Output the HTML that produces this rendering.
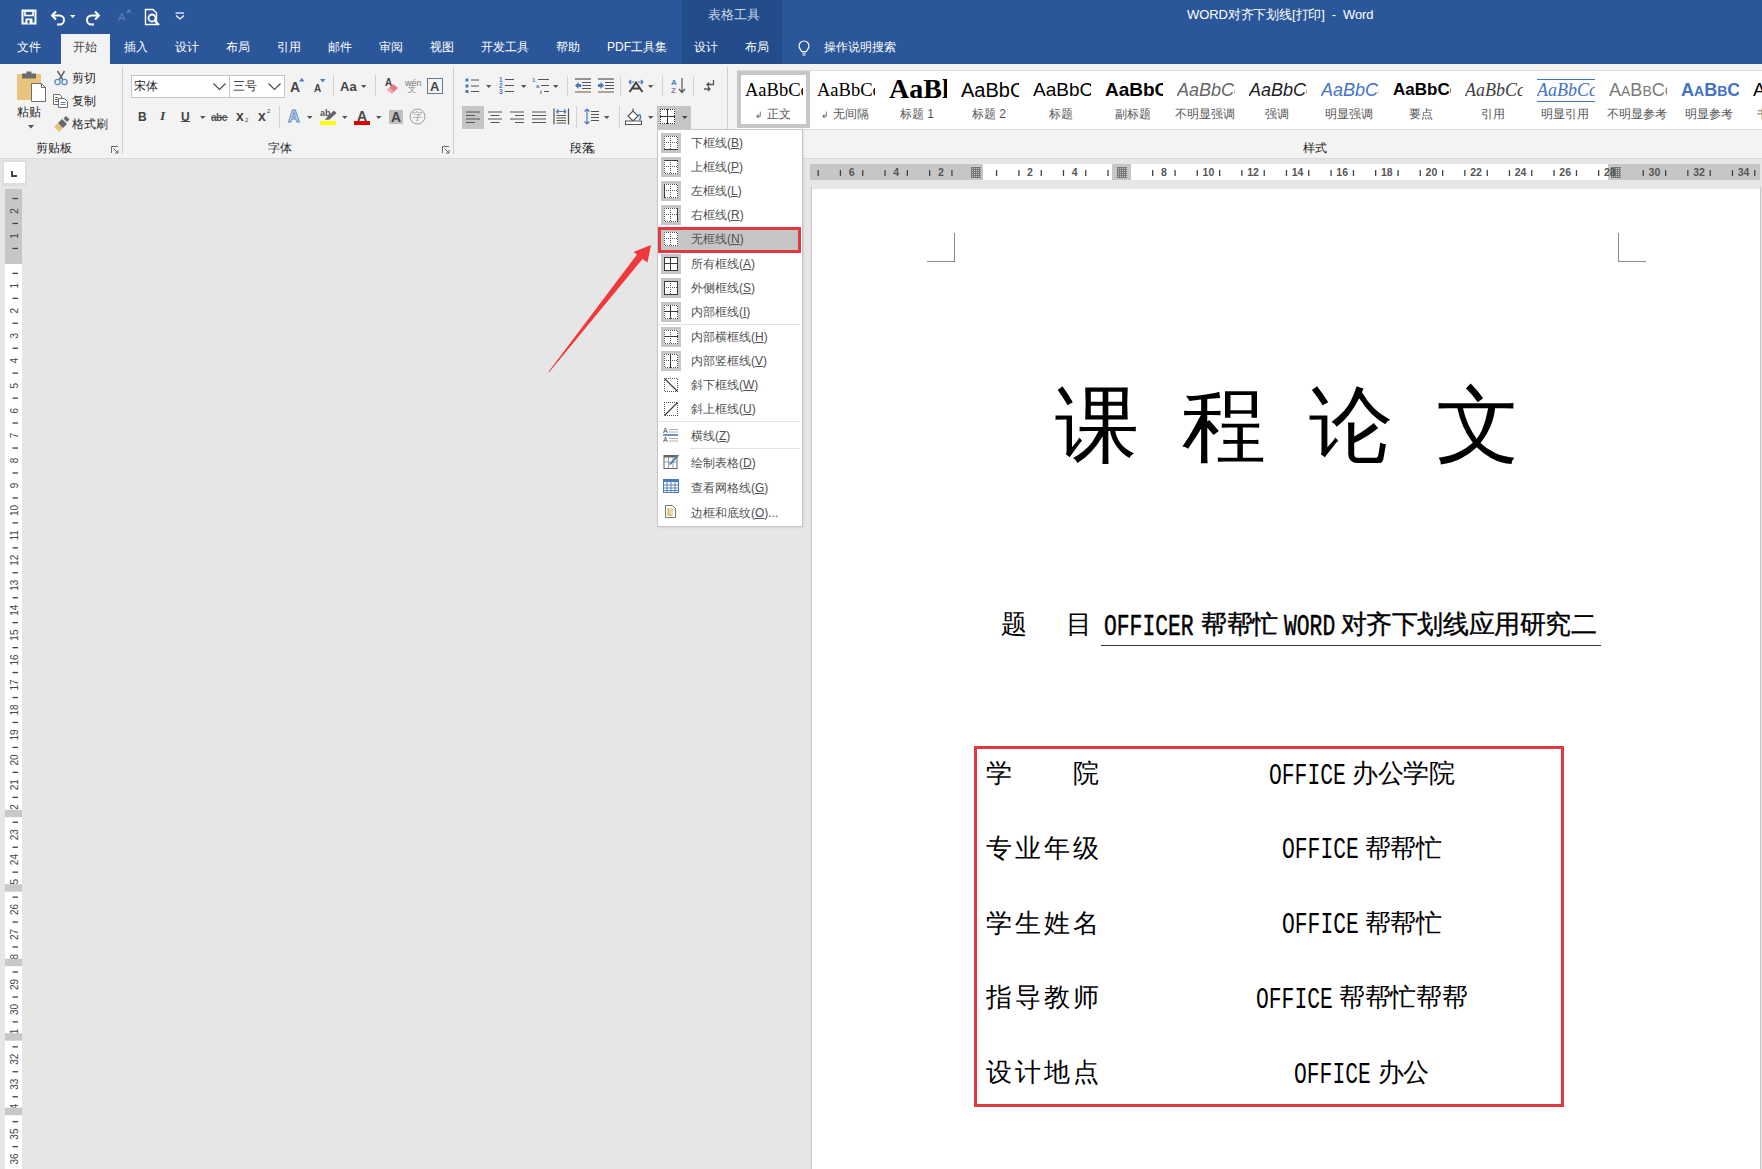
<!DOCTYPE html>
<html><head><meta charset="utf-8">
<style>
*{margin:0;padding:0;box-sizing:border-box}
html,body{width:1762px;height:1169px;overflow:hidden;background:#e6e6e6;font-family:"Liberation Sans",sans-serif;}
.a{position:absolute;white-space:nowrap;line-height:1}
svg.a{overflow:visible}
.tab{color:#fff;font-size:12px;line-height:15px}
.sr{font-family:"Liberation Serif",serif}
</style></head><body>

<div class="a" style="left:0px;top:0px;width:1762px;height:64px;background:#2b579a"></div>
<div class="a" style="left:682px;top:0px;width:100px;height:64px;background:#234c8a"></div>
<div class="a" style="left:61px;top:34px;width:49px;height:30px;background:#f3f3f3"></div>
<div class="a tab" style="left:17px;top:40px;color:#fff">文件</div>
<div class="a tab" style="left:73px;top:40px;color:#444">开始</div>
<div class="a tab" style="left:124px;top:40px;color:#fff">插入</div>
<div class="a tab" style="left:175px;top:40px;color:#fff">设计</div>
<div class="a tab" style="left:226px;top:40px;color:#fff">布局</div>
<div class="a tab" style="left:277px;top:40px;color:#fff">引用</div>
<div class="a tab" style="left:328px;top:40px;color:#fff">邮件</div>
<div class="a tab" style="left:379px;top:40px;color:#fff">审阅</div>
<div class="a tab" style="left:430px;top:40px;color:#fff">视图</div>
<div class="a tab" style="left:481px;top:40px;color:#fff">开发工具</div>
<div class="a tab" style="left:556px;top:40px;color:#fff">帮助</div>
<div class="a tab" style="left:607px;top:40px;color:#fff">PDF工具集</div>
<div class="a tab" style="left:694px;top:40px;color:#fff">设计</div>
<div class="a tab" style="left:745px;top:40px;color:#fff">布局</div>
<div class="a tab" style="left:824px;top:40px;color:#fff">操作说明搜索</div>
<div class="a tab" style="left:708px;top:7.5px;font-size:12.5px;color:#c9d5e8">表格工具</div>
<div class="a" style="left:1187px;top:7px;color:#fff;font-size:13px;line-height:15px;letter-spacing:-0.12px">WORD对齐下划线[打印]&nbsp;&nbsp;-&nbsp;&nbsp;Word</div>
<svg class="a" style="left:21px;top:9px;" width="16" height="16" viewBox="0 0 16 16"><path d="M1.5 1.5 H14.5 V14.5 H1.5 Z" fill="none" stroke="#fff" stroke-width="2"/><rect x="4" y="2" width="8" height="4.5" fill="none" stroke="#fff" stroke-width="1.6"/><rect x="4.5" y="9.5" width="7" height="5" fill="#fff"/><rect x="6.5" y="11" width="2" height="3.5" fill="#2b579a"/></svg>
<svg class="a" style="left:50px;top:9px;" width="16" height="16" viewBox="0 0 16 16"><path d="M2.5 6.5 H9.5 A4.5 4.5 0 0 1 9.5 15.5 H7" fill="none" stroke="#fff" stroke-width="2"/><path d="M6 2.5 L2 6.5 L6 10.5" fill="none" stroke="#fff" stroke-width="2"/></svg>
<svg class="a" style="left:70px;top:15px;" width="6" height="4" viewBox="0 0 6 4"><path d="M0 0 H5.5 L2.75 3 Z" fill="#fff"/></svg>
<svg class="a" style="left:85px;top:9px;" width="16" height="16" viewBox="0 0 16 16"><path d="M13.5 6.5 H6.5 A4.5 4.5 0 0 0 6.5 15.5 H9" fill="none" stroke="#fff" stroke-width="2"/><path d="M10 2.5 L14 6.5 L10 10.5" fill="none" stroke="#fff" stroke-width="2"/></svg>
<div class="a" style="left:118px;top:12px;font-size:11px;color:#5d7fb5;">A</div>
<svg class="a" style="left:126px;top:9px;" width="6" height="4" viewBox="0 0 6 4"><path d="M0 3.5 L2.75 0 L5.5 3.5 Z" fill="#5d7fb5"/></svg>
<svg class="a" style="left:144px;top:8px;" width="17" height="18" viewBox="0 0 17 18"><path d="M1.5 1.5 H9 L12.5 5 V16.5 H1.5 Z" fill="none" stroke="#fff" stroke-width="1.4"/><circle cx="8" cy="10" r="3.5" fill="none" stroke="#fff" stroke-width="1.8"/><path d="M10.5 12.5 L15 17" stroke="#fff" stroke-width="2"/></svg>
<svg class="a" style="left:175px;top:12px;" width="10" height="8" viewBox="0 0 10 8"><path d="M0.5 1 H9" stroke="#fff" stroke-width="1.2"/><path d="M1 3.5 L5 7 L9 3.5" fill="none" stroke="#fff" stroke-width="1.2"/></svg>
<svg class="a" style="left:798px;top:40px;" width="12" height="16" viewBox="0 0 12 16"><path d="M6 1 A5 5 0 0 1 11 6 C11 8.5 9 9.5 8.5 11.5 H3.5 C3 9.5 1 8.5 1 6 A5 5 0 0 1 6 1 Z" fill="none" stroke="#fff" stroke-width="1.2"/><path d="M4 13 H8 M4.5 15 H7.5" stroke="#fff" stroke-width="1.2"/></svg>
<div class="a" style="left:0px;top:64px;width:1762px;height:95px;background:#f3f3f3;border-bottom:1px solid #dadada"></div>
<div class="a" style="left:122px;top:67px;width:1px;height:87px;background:#d0d0d0"></div>
<div class="a" style="left:453px;top:67px;width:1px;height:87px;background:#d0d0d0"></div>
<div class="a" style="left:727px;top:67px;width:1px;height:87px;background:#d0d0d0"></div>
<svg class="a" style="left:16px;top:71px;" width="31" height="32" viewBox="0 0 31 32">
<rect x="1" y="3" width="24" height="26" fill="#e9c47c"/>
<rect x="6" y="2.5" width="14" height="5" fill="#6d6d6d"/>
<rect x="10.5" y="0.5" width="5" height="3" fill="#6d6d6d"/>
<path d="M15.5 12.5 H25.5 L29.5 16.5 V30.5 H15.5 Z" fill="#fff" stroke="#6d6d6d" stroke-width="1"/>
<path d="M25.5 12.5 V16.5 H29.5" fill="none" stroke="#6d6d6d" stroke-width="1"/>
</svg>
<div class="a" style="left:17px;top:106px;font-size:12px;color:#262626;">粘贴</div>
<svg class="a" style="left:28px;top:125px;" width="6" height="4" viewBox="0 0 6 4"><path d="M0 0 H6 L3 3.5 Z" fill="#505050"/></svg>
<svg class="a" style="left:53px;top:70px;" width="16" height="16" viewBox="0 0 16 16">
<path d="M4.5 1 L10 10 M11.5 1 L6 10" stroke="#6a6a6a" stroke-width="1.6" fill="none"/>
<circle cx="4.5" cy="12" r="2.6" fill="none" stroke="#5b8bc7" stroke-width="1.3"/>
<circle cx="11.5" cy="12" r="2.6" fill="none" stroke="#5b8bc7" stroke-width="1.3"/>
</svg>
<div class="a" style="left:72px;top:72px;font-size:12px;color:#262626;">剪切</div>
<svg class="a" style="left:53px;top:93px;" width="16" height="16" viewBox="0 0 16 16">
<path d="M0.5 1.5 H6.5 L8.5 3.5 V11.5 H0.5 Z" fill="#fff" stroke="#6a6a6a" stroke-width="1"/>
<path d="M2 4.5 H5 M2 6.5 H5 M2 8.5 H5" stroke="#6a6a6a" stroke-width="1"/>
<path d="M5.5 5.5 H11.5 L14.5 8.5 V14.5 H5.5 Z" fill="#fff" stroke="#6a6a6a" stroke-width="1"/>
<path d="M7.5 9.5 H12.5 M7.5 11.5 H12.5" stroke="#5b8bc7" stroke-width="1"/>
</svg>
<div class="a" style="left:72px;top:95px;font-size:12px;color:#262626;">复制</div>
<svg class="a" style="left:53px;top:116px;" width="17" height="17" viewBox="0 0 17 17">
<path d="M1 11 L5 7 L10 12 L6 16 Z" fill="#e6c27c"/>
<path d="M5 7 L9 3 L14 8 L10 12 Z" fill="#6a6a6a"/>
<path d="M10.5 2.5 L13 0 L16.5 3.5 L14 6 Z" fill="#6a6a6a"/>
</svg>
<div class="a" style="left:72px;top:118px;font-size:12px;color:#262626;">格式刷</div>
<svg class="a" style="left:111px;top:146px;" width="8" height="8" viewBox="0 0 8 8"><path d="M0.5 7 V0.5 H7" stroke="#6a6a6a" fill="none"/><path d="M2.5 2.5 L7 7 M4 7 H7 V4" stroke="#6a6a6a" fill="none"/></svg>
<svg class="a" style="left:442px;top:146px;" width="8" height="8" viewBox="0 0 8 8"><path d="M0.5 7 V0.5 H7" stroke="#6a6a6a" fill="none"/><path d="M2.5 2.5 L7 7 M4 7 H7 V4" stroke="#6a6a6a" fill="none"/></svg>
<svg class="a" style="left:587px;top:146px;" width="8" height="8" viewBox="0 0 8 8"><path d="M0.5 7 V0.5 H7" stroke="#6a6a6a" fill="none"/><path d="M2.5 2.5 L7 7 M4 7 H7 V4" stroke="#6a6a6a" fill="none"/></svg>
<div class="a" style="left:131px;top:75px;width:99px;height:23px;background:#fff;border:1px solid #c6c6c6"></div>
<div class="a" style="left:229px;top:75px;width:56px;height:23px;background:#fff;border:1px solid #c6c6c6"></div>
<div class="a" style="left:134px;top:80px;font-size:12px;color:#262626;">宋体</div>
<div class="a" style="left:233px;top:80px;font-size:12px;color:#262626;">三号</div>
<svg class="a" style="left:213px;top:83px;" width="13" height="8" viewBox="0 0 13 8"><path d="M0.5 0.5 L6.5 6.5 L12.5 0.5" fill="none" stroke="#444" stroke-width="1.1"/></svg>
<svg class="a" style="left:268px;top:83px;" width="13" height="8" viewBox="0 0 13 8"><path d="M0.5 0.5 L6.5 6.5 L12.5 0.5" fill="none" stroke="#444" stroke-width="1.1"/></svg>
<div class="a" style="left:290px;top:80px;font-size:14px;color:#444;font-weight:bold">A</div>
<svg class="a" style="left:299px;top:78px;" width="6" height="4" viewBox="0 0 6 4"><path d="M0 3.5 L2.75 0 L5.5 3.5 Z" fill="#4a7bbd"/></svg>
<div class="a" style="left:314px;top:84px;font-size:10px;color:#444;font-weight:bold">A</div>
<svg class="a" style="left:320px;top:79px;" width="6" height="4" viewBox="0 0 6 4"><path d="M0 0 H5.5 L2.75 3.5 Z" fill="#4a7bbd"/></svg>
<div class="a" style="left:333px;top:75px;width:1px;height:21px;background:#d2d2d2"></div>
<div class="a" style="left:340px;top:80px;font-size:13px;color:#444;font-weight:bold">Aa</div>
<svg class="a" style="left:361px;top:85px;" width="6" height="4" viewBox="0 0 6 4"><path d="M0 0 H5.5 L2.75 3 Z" fill="#555"/></svg>
<div class="a" style="left:375px;top:75px;width:1px;height:21px;background:#d2d2d2"></div>
<div class="a" style="left:385px;top:78px;font-size:10px;color:#444;font-weight:bold">A</div>
<svg class="a" style="left:386px;top:83px;" width="14" height="11" viewBox="0 0 14 11"><path d="M1 7 L7 1 L12 5 L6 10.5 Z" fill="#e7778a"/><path d="M1 7 L3.5 4.5 L8.5 9 L6 10.5 Z" fill="#f0a8b3"/></svg>
<div class="a" style="left:405px;top:79px;font-size:9px;color:#777;">wén</div>
<div class="a" style="left:408px;top:86px;font-size:8px;color:#888;">文</div>
<div class="a" style="left:427px;top:78px;width:16px;height:16px;border:1.5px solid #5d7a98"></div>
<div class="a" style="left:430px;top:80px;font-size:13px;color:#444;font-weight:bold">A</div>
<div class="a" style="left:138px;top:111px;font-size:12px;color:#444;font-weight:bold">B</div>
<div class="a" style="left:160px;top:109px;font-size:13.5px;color:#444;font-style:italic;font-family:'Liberation Serif',serif;font-weight:bold">I</div>
<div class="a" style="left:181px;top:111px;font-size:12px;color:#444;font-weight:bold">U</div>
<div class="a" style="left:181px;top:121px;width:9px;height:1px;background:#444"></div>
<svg class="a" style="left:200px;top:116px;" width="6" height="4" viewBox="0 0 6 4"><path d="M0 0 H5.5 L2.75 3 Z" fill="#555"/></svg>
<div class="a" style="left:211px;top:113px;font-size:10px;color:#555;font-weight:bold;letter-spacing:-0.5px">abc</div>
<div class="a" style="left:211px;top:117px;width:17px;height:1px;background:#555"></div>
<div class="a" style="left:236px;top:109px;font-size:14px;color:#444;font-weight:bold">x</div>
<div class="a" style="left:245px;top:117px;font-size:6px;color:#444;">2</div>
<div class="a" style="left:258px;top:109px;font-size:14px;color:#444;font-weight:bold">x</div>
<div class="a" style="left:267px;top:108px;font-size:6px;color:#444;">2</div>
<div class="a" style="left:279px;top:106px;width:1px;height:22px;background:#d2d2d2"></div>
<div class="a" style="left:288px;top:109px;font-size:16px;color:#dfe9f5;font-weight:bold;-webkit-text-stroke:1px #5b8bc7">A</div>
<svg class="a" style="left:307px;top:116px;" width="6" height="4" viewBox="0 0 6 4"><path d="M0 0 H5.5 L2.75 3 Z" fill="#555"/></svg>
<div class="a" style="left:320px;top:109px;font-size:9px;color:#555;font-weight:bold">ab</div>
<svg class="a" style="left:324px;top:110px;" width="13" height="11" viewBox="0 0 13 11"><path d="M1 10 L3 7 L10 0.5 L12.5 3 L5.5 9.5 Z" fill="#666"/></svg>
<div class="a" style="left:320px;top:121px;width:16px;height:4px;background:#ffff00"></div>
<svg class="a" style="left:342px;top:116px;" width="6" height="4" viewBox="0 0 6 4"><path d="M0 0 H5.5 L2.75 3 Z" fill="#555"/></svg>
<div class="a" style="left:357px;top:109px;font-size:14px;color:#444;font-weight:bold">A</div>
<div class="a" style="left:354px;top:121px;width:16px;height:4px;background:#e00000"></div>
<svg class="a" style="left:376px;top:116px;" width="6" height="4" viewBox="0 0 6 4"><path d="M0 0 H5.5 L2.75 3 Z" fill="#555"/></svg>
<div class="a" style="left:389px;top:110px;width:14px;height:14px;background:#c0c0c0"></div>
<div class="a" style="left:391px;top:110px;font-size:14px;color:#444;font-weight:bold">A</div>
<svg class="a" style="left:409px;top:108px;" width="17" height="17" viewBox="0 0 17 17"><circle cx="8.5" cy="8.5" r="7.5" fill="none" stroke="#999" stroke-width="1"/></svg>
<div class="a" style="left:412px;top:111px;font-size:11px;color:#999;">字</div>
<svg class="a" style="left:465px;top:77px;" width="15" height="16" viewBox="0 0 15 16">
<rect x="0.5" y="1.5" width="3" height="3" fill="#4a7bbd"/><rect x="0.5" y="7.5" width="3" height="3" fill="#4a7bbd"/><rect x="0.5" y="13" width="3" height="3" fill="#4a7bbd"/>
<path d="M6 3 H14 M6 9 H14 M6 14.5 H14" stroke="#555" stroke-width="1.2"/>
</svg>
<svg class="a" style="left:486px;top:85px;" width="6" height="4" viewBox="0 0 6 4"><path d="M0 0 H5.5 L2.75 3 Z" fill="#555"/></svg>
<svg class="a" style="left:499px;top:76px;" width="16" height="18" viewBox="0 0 16 18">
<text x="0" y="6" font-size="6.5" font-family="Liberation Sans" font-weight="bold" fill="#4a7bbd">1</text>
<text x="0" y="12" font-size="6.5" font-family="Liberation Sans" font-weight="bold" fill="#4a7bbd">2</text>
<text x="0" y="18" font-size="6.5" font-family="Liberation Sans" font-weight="bold" fill="#4a7bbd">3</text>
<path d="M6 3.5 H15 M6 9.5 H15 M6 15.5 H15" stroke="#555" stroke-width="1.2"/>
</svg>
<svg class="a" style="left:521px;top:85px;" width="6" height="4" viewBox="0 0 6 4"><path d="M0 0 H5.5 L2.75 3 Z" fill="#555"/></svg>
<svg class="a" style="left:532px;top:76px;" width="18" height="18" viewBox="0 0 18 18">
<text x="0" y="6" font-size="6" font-family="Liberation Sans" font-weight="bold" fill="#4a7bbd">1</text>
<text x="4" y="12" font-size="6" font-family="Liberation Sans" font-weight="bold" fill="#4a7bbd">a</text>
<text x="8" y="18" font-size="6" font-family="Liberation Sans" font-weight="bold" fill="#555">i</text>
<path d="M6 3.5 H17 M9 9.5 H17 M12 15.5 H17" stroke="#555" stroke-width="1.2"/>
</svg>
<svg class="a" style="left:553px;top:85px;" width="6" height="4" viewBox="0 0 6 4"><path d="M0 0 H5.5 L2.75 3 Z" fill="#555"/></svg>
<div class="a" style="left:567px;top:76px;width:1px;height:20px;background:#d2d2d2"></div>
<svg class="a" style="left:574px;top:78px;" width="18" height="15" viewBox="0 0 18 15">
<path d="M1 1 H17" stroke="#555" stroke-width="1.2"/>
<path d="M8 4.5 H17 M8 7.5 H17 M8 10.5 H17" stroke="#555" stroke-width="1.2"/>
<path d="M1 14 H17" stroke="#8a6f5a" stroke-width="1.2"/>
<path d="M1 7.5 L4.5 4 V6 H7 V9 H4.5 V11 Z" fill="#4a7bbd"/>
</svg>
<svg class="a" style="left:597px;top:78px;" width="18" height="15" viewBox="0 0 18 15">
<path d="M1 1 H17" stroke="#555" stroke-width="1.2"/>
<path d="M8 4.5 H17 M8 7.5 H17 M8 10.5 H17" stroke="#555" stroke-width="1.2"/>
<path d="M1 14 H17" stroke="#8a6f5a" stroke-width="1.2"/>
<path d="M7 7.5 L3.5 4 V6 H1 V9 H3.5 V11 Z" fill="#4a7bbd"/>
</svg>
<div class="a" style="left:620px;top:76px;width:1px;height:20px;background:#d2d2d2"></div>
<svg class="a" style="left:627px;top:79px;" width="18" height="14" viewBox="0 0 18 14">
<path d="M2 3 H7 M2 3 L4 1 M2 3 L4 5" stroke="#4a7bbd" stroke-width="1.2" fill="none"/>
<path d="M11 3 H16 M16 3 L14 1 M16 3 L14 5" stroke="#4a7bbd" stroke-width="1.2" fill="none"/>
<path d="M2.5 13 L9 3.5 L15.5 13 M5 9.5 H13" stroke="#444" stroke-width="2" fill="none"/>
</svg>
<svg class="a" style="left:648px;top:85px;" width="6" height="4" viewBox="0 0 6 4"><path d="M0 0 H5.5 L2.75 3 Z" fill="#555"/></svg>
<div class="a" style="left:662px;top:76px;width:1px;height:20px;background:#d2d2d2"></div>
<svg class="a" style="left:671px;top:77px;" width="15" height="17" viewBox="0 0 15 17">
<text x="0" y="7.5" font-size="8" font-family="Liberation Sans" font-weight="bold" fill="#4a7bbd">A</text>
<text x="0" y="16" font-size="8" font-family="Liberation Sans" font-weight="bold" fill="#9b6fb4">Z</text>
<path d="M11 1 V15 M8 12 L11 15.5 L14 12" stroke="#555" stroke-width="1.2" fill="none"/>
</svg>
<div class="a" style="left:693px;top:76px;width:1px;height:20px;background:#d2d2d2"></div>
<svg class="a" style="left:703px;top:79px;" width="12" height="14" viewBox="0 0 12 14">
<path d="M10.5 1 V5.5 H4 M6 3.5 L4 5.5 L6 7.5" stroke="#555" stroke-width="1.3" fill="none"/>
<path d="M1 10 H7 M5 8 L7 10 L5 12" stroke="#555" stroke-width="1.3" fill="none"/>
</svg>
<div class="a" style="left:462px;top:106px;width:22px;height:23px;background:#c5c5c5"></div>
<svg class="a" style="left:466px;top:111px;" width="14" height="13" viewBox="0 0 14 13"><path d="M0 1 H14 M0 4.5 H9 M0 8 H14 M0 11.5 H9" stroke="#555" stroke-width="1.2"/></svg>
<svg class="a" style="left:488px;top:111px;" width="14" height="13" viewBox="0 0 14 13"><path d="M0 1 H14 M2.5 4.5 H11.5 M0 8 H14 M2.5 11.5 H11.5" stroke="#555" stroke-width="1.2"/></svg>
<svg class="a" style="left:510px;top:111px;" width="14" height="13" viewBox="0 0 14 13"><path d="M0 1 H14 M5 4.5 H14 M0 8 H14 M5 11.5 H14" stroke="#555" stroke-width="1.2"/></svg>
<svg class="a" style="left:532px;top:111px;" width="14" height="13" viewBox="0 0 14 13"><path d="M0 1 H14 M0 4.5 H14 M0 8 H14 M0 11.5 H14" stroke="#555" stroke-width="1.2"/></svg>
<svg class="a" style="left:553px;top:108px;" width="17" height="17" viewBox="0 0 17 17">
<path d="M1 0.5 V16.5 M15.5 0.5 V16.5" stroke="#555" stroke-width="1.2"/>
<path d="M3.5 3.5 H13 M3.5 3.5 L5.5 1.5 M3.5 3.5 L5.5 5.5 M13 3.5 L11 1.5 M13 3.5 L11 5.5" stroke="#4a7bbd" stroke-width="1.2" fill="none"/>
<path d="M3.5 7.5 H13 M3.5 10 H13 M3.5 12.5 H13 M3.5 15 H13" stroke="#555" stroke-width="1.2"/>
</svg>
<div class="a" style="left:576px;top:106px;width:1px;height:22px;background:#d2d2d2"></div>
<svg class="a" style="left:584px;top:108px;" width="16" height="17" viewBox="0 0 16 17">
<path d="M3 1 V16 M0.5 3.5 L3 1 L5.5 3.5 M0.5 13.5 L3 16 L5.5 13.5" stroke="#4a7bbd" stroke-width="1.2" fill="none"/>
<path d="M7 3.5 H15 M7 6.5 H15 M7 9.5 H15 M7 12.5 H15" stroke="#555" stroke-width="1.2"/>
</svg>
<svg class="a" style="left:604px;top:116px;" width="6" height="4" viewBox="0 0 6 4"><path d="M0 0 H5.5 L2.75 3 Z" fill="#555"/></svg>
<div class="a" style="left:619px;top:106px;width:1px;height:22px;background:#d2d2d2"></div>
<svg class="a" style="left:625px;top:108px;" width="18" height="17" viewBox="0 0 18 17">
<path d="M3 8 L8 3 L13 8 L8 13 Z" fill="#fff" stroke="#555" stroke-width="1.2"/>
<path d="M8 3 V0.5" stroke="#555" stroke-width="1.2"/>
<path d="M13 8 Q16 5 15.5 10 L14.5 12" stroke="#4a7bbd" stroke-width="1.5" fill="none"/>
<rect x="0.5" y="13" width="16" height="3.5" fill="#fff" stroke="#555" stroke-width="1"/>
</svg>
<svg class="a" style="left:648px;top:116px;" width="6" height="4" viewBox="0 0 6 4"><path d="M0 0 H5.5 L2.75 3 Z" fill="#555"/></svg>
<div class="a" style="left:657px;top:106px;width:34px;height:24px;background:#c5c5c5"></div>
<svg class="a" style="left:660px;top:109px;shape-rendering:crispEdges" width="15" height="15" viewBox="0 0 15 15"><rect x="0" y="0" width="15" height="15" fill="#fff"/><rect x="0" y="0" width="1" height="1" fill="#333"/><rect x="0" y="2" width="1" height="1" fill="#333"/><rect x="0" y="4" width="1" height="1" fill="#333"/><rect x="0" y="6" width="1" height="1" fill="#333"/><rect x="0" y="8" width="1" height="1" fill="#333"/><rect x="0" y="10" width="1" height="1" fill="#333"/><rect x="0" y="12" width="1" height="1" fill="#333"/><rect x="0" y="14" width="1" height="1" fill="#333"/><rect x="2" y="0" width="1" height="1" fill="#333"/><rect x="2" y="14" width="1" height="1" fill="#333"/><rect x="4" y="0" width="1" height="1" fill="#333"/><rect x="4" y="14" width="1" height="1" fill="#333"/><rect x="6" y="0" width="1" height="1" fill="#333"/><rect x="6" y="14" width="1" height="1" fill="#333"/><rect x="8" y="0" width="1" height="1" fill="#333"/><rect x="8" y="14" width="1" height="1" fill="#333"/><rect x="10" y="0" width="1" height="1" fill="#333"/><rect x="10" y="14" width="1" height="1" fill="#333"/><rect x="12" y="0" width="1" height="1" fill="#333"/><rect x="12" y="14" width="1" height="1" fill="#333"/><rect x="14" y="0" width="1" height="1" fill="#333"/><rect x="14" y="2" width="1" height="1" fill="#333"/><rect x="14" y="4" width="1" height="1" fill="#333"/><rect x="14" y="6" width="1" height="1" fill="#333"/><rect x="14" y="8" width="1" height="1" fill="#333"/><rect x="14" y="10" width="1" height="1" fill="#333"/><rect x="14" y="12" width="1" height="1" fill="#333"/><rect x="14" y="14" width="1" height="1" fill="#333"/><rect x="0" y="7" width="15" height="1.3" fill="#333"/><rect x="7" y="0" width="1.3" height="15" fill="#333"/></svg>
<svg class="a" style="left:682px;top:116px;" width="6" height="4" viewBox="0 0 6 4"><path d="M0 0 H5.5 L2.75 3 Z" fill="#444"/></svg>
<div class="a" style="left:737px;top:70px;width:1025px;height:60px;background:#fff;border-top:1px solid #dcdcdc;border-bottom:1px solid #dcdcdc"></div>
<div class="a" style="left:737px;top:71px;width:73px;height:57px;border:4px solid #c6c6c6;background:#fff"></div>
<div class="a" style="left:745px;top:78px;width:58px;height:24px;overflow:hidden;line-height:24px;font-family:'Liberation Serif',serif;font-size:18.5px;color:#000">AaBbCcDd</div>
<div class="a" style="left:737px;top:107px;width:72px;text-align:center;font-size:12px;color:#555;line-height:14px"><span style="font-size:9px">↲</span> 正文</div>
<div class="a" style="left:817px;top:78px;width:58px;height:24px;overflow:hidden;line-height:24px;font-family:'Liberation Serif',serif;font-size:18.5px;color:#000">AaBbCcDd</div>
<div class="a" style="left:809px;top:107px;width:72px;text-align:center;font-size:12px;color:#555;line-height:14px"><span style="font-size:9px">↲</span> 无间隔</div>
<div class="a" style="left:889px;top:78px;width:58px;height:24px;overflow:hidden;line-height:24px;font-family:'Liberation Serif',serif;font-size:28px;font-weight:bold;color:#000;height:26px;line-height:26px;top:76px">AaBl</div>
<div class="a" style="left:881px;top:107px;width:72px;text-align:center;font-size:12px;color:#555;line-height:14px">标题 1</div>
<div class="a" style="left:961px;top:78px;width:58px;height:24px;overflow:hidden;line-height:24px;font-family:'Liberation Sans',sans-serif;font-size:20px;color:#000">AaBbC</div>
<div class="a" style="left:953px;top:107px;width:72px;text-align:center;font-size:12px;color:#555;line-height:14px">标题 2</div>
<div class="a" style="left:1033px;top:78px;width:58px;height:24px;overflow:hidden;line-height:24px;font-family:'Liberation Sans',sans-serif;font-size:19px;color:#000">AaBbC</div>
<div class="a" style="left:1025px;top:107px;width:72px;text-align:center;font-size:12px;color:#555;line-height:14px">标题</div>
<div class="a" style="left:1105px;top:78px;width:58px;height:24px;overflow:hidden;line-height:24px;font-family:'Liberation Sans',sans-serif;font-size:19px;font-weight:bold;color:#000">AaBbC</div>
<div class="a" style="left:1097px;top:107px;width:72px;text-align:center;font-size:12px;color:#555;line-height:14px">副标题</div>
<div class="a" style="left:1177px;top:78px;width:58px;height:24px;overflow:hidden;line-height:24px;font-family:'Liberation Sans',sans-serif;font-size:18px;font-style:italic;color:#666">AaBbCcD</div>
<div class="a" style="left:1169px;top:107px;width:72px;text-align:center;font-size:12px;color:#555;line-height:14px">不明显强调</div>
<div class="a" style="left:1249px;top:78px;width:58px;height:24px;overflow:hidden;line-height:24px;font-family:'Liberation Sans',sans-serif;font-size:18px;font-style:italic;color:#222">AaBbCcD</div>
<div class="a" style="left:1241px;top:107px;width:72px;text-align:center;font-size:12px;color:#555;line-height:14px">强调</div>
<div class="a" style="left:1321px;top:78px;width:58px;height:24px;overflow:hidden;line-height:24px;font-family:'Liberation Sans',sans-serif;font-size:18px;font-style:italic;color:#4472c4">AaBbCcD</div>
<div class="a" style="left:1313px;top:107px;width:72px;text-align:center;font-size:12px;color:#555;line-height:14px">明显强调</div>
<div class="a" style="left:1393px;top:78px;width:58px;height:24px;overflow:hidden;line-height:24px;font-family:'Liberation Sans',sans-serif;font-size:17px;font-weight:bold;color:#000">AaBbCcD</div>
<div class="a" style="left:1385px;top:107px;width:72px;text-align:center;font-size:12px;color:#555;line-height:14px">要点</div>
<div class="a" style="left:1465px;top:78px;width:58px;height:24px;overflow:hidden;line-height:24px;font-family:'Liberation Serif',serif;font-size:18px;font-style:italic;color:#404040">AaBbCcD</div>
<div class="a" style="left:1457px;top:107px;width:72px;text-align:center;font-size:12px;color:#555;line-height:14px">引用</div>
<div class="a" style="left:1537px;top:78px;width:58px;height:24px;overflow:hidden;line-height:24px;font-family:'Liberation Serif',serif;font-size:18px;font-style:italic;color:#4472c4">AaBbCcD</div>
<div class="a" style="left:1529px;top:107px;width:72px;text-align:center;font-size:12px;color:#555;line-height:14px">明显引用</div>
<div class="a" style="left:1537px;top:79px;width:58px;height:1px;background:#4472c4"></div>
<div class="a" style="left:1537px;top:101px;width:58px;height:1px;background:#4472c4"></div>
<div class="a" style="left:1609px;top:78px;width:58px;height:24px;overflow:hidden;line-height:24px;font-family:'Liberation Sans',sans-serif;font-size:18px;color:#7a7a7a">A<span style="font-size:14px">A</span>B<span style="font-size:14px">B</span>C<span style="font-size:14px">C</span></div>
<div class="a" style="left:1601px;top:107px;width:72px;text-align:center;font-size:12px;color:#555;line-height:14px">不明显参考</div>
<div class="a" style="left:1681px;top:78px;width:58px;height:24px;overflow:hidden;line-height:24px;font-family:'Liberation Sans',sans-serif;font-size:18px;font-weight:bold;color:#4472c4">A<span style="font-size:14px">A</span>B<span style="font-size:14px">B</span>C<span style="font-size:14px">C</span></div>
<div class="a" style="left:1673px;top:107px;width:72px;text-align:center;font-size:12px;color:#555;line-height:14px">明显参考</div>
<div class="a" style="left:1753px;top:78px;width:9px;height:24px;overflow:hidden;line-height:24px;font-family:'Liberation Sans',sans-serif;font-size:19px;color:#000">A</div>
<div class="a" style="left:1757px;top:107px;font-size:12px;color:#555;line-height:14px">书</div>
<div class="a" style="left:36px;top:142px;font-size:12px;color:#262626;">剪贴板</div>
<div class="a" style="left:268px;top:142px;font-size:12px;color:#262626;">字体</div>
<div class="a" style="left:570px;top:142px;font-size:12px;color:#262626;">段落</div>
<div class="a" style="left:1303px;top:142px;font-size:12px;color:#262626;">样式</div>
<div class="a" style="left:0px;top:159px;width:1762px;height:1010px;background:#e6e6e6"></div>
<div class="a" style="left:811px;top:187px;width:1px;height:982px;background:#c6c6c6"></div>
<div class="a" style="left:812px;top:189px;width:948px;height:980px;background:#fff"></div>
<div class="a" style="left:1760px;top:187px;width:1px;height:982px;background:#c6c6c6"></div>
<div class="a" style="left:2px;top:160px;width:25px;height:26px;background:#dedede"></div>
<div class="a" style="left:4px;top:162px;width:21px;height:21px;background:#fff"></div>
<svg class="a" style="left:11px;top:171px;" width="7" height="6" viewBox="0 0 7 6"><path d="M1 0 V5 H6" stroke="#444" stroke-width="2" fill="none"/></svg>
<div class="a" style="left:810px;top:164px;width:950px;height:16px;background:#c6c6c6"></div>
<div class="a" style="left:983px;top:164px;width:625px;height:16px;background:#fff"></div>
<div class="a" style="left:1112px;top:164px;width:19px;height:16px;background:#c6c6c6"></div>
<svg class="a" style="left:971px;top:167px;" width="10" height="11" viewBox="0 0 10 11"><rect x="0" y="0" width="10" height="11" fill="#777"/><rect x="1" y="1" width="1" height="1" fill="#c6c6c6"/><rect x="1" y="3" width="1" height="1" fill="#c6c6c6"/><rect x="1" y="5" width="1" height="1" fill="#c6c6c6"/><rect x="1" y="7" width="1" height="1" fill="#c6c6c6"/><rect x="1" y="9" width="1" height="1" fill="#c6c6c6"/><rect x="3" y="1" width="1" height="1" fill="#c6c6c6"/><rect x="3" y="3" width="1" height="1" fill="#c6c6c6"/><rect x="3" y="5" width="1" height="1" fill="#c6c6c6"/><rect x="3" y="7" width="1" height="1" fill="#c6c6c6"/><rect x="3" y="9" width="1" height="1" fill="#c6c6c6"/><rect x="5" y="1" width="1" height="1" fill="#c6c6c6"/><rect x="5" y="3" width="1" height="1" fill="#c6c6c6"/><rect x="5" y="5" width="1" height="1" fill="#c6c6c6"/><rect x="5" y="7" width="1" height="1" fill="#c6c6c6"/><rect x="5" y="9" width="1" height="1" fill="#c6c6c6"/><rect x="7" y="1" width="1" height="1" fill="#c6c6c6"/><rect x="7" y="3" width="1" height="1" fill="#c6c6c6"/><rect x="7" y="5" width="1" height="1" fill="#c6c6c6"/><rect x="7" y="7" width="1" height="1" fill="#c6c6c6"/><rect x="7" y="9" width="1" height="1" fill="#c6c6c6"/><rect x="9" y="1" width="1" height="1" fill="#c6c6c6"/><rect x="9" y="3" width="1" height="1" fill="#c6c6c6"/><rect x="9" y="5" width="1" height="1" fill="#c6c6c6"/><rect x="9" y="7" width="1" height="1" fill="#c6c6c6"/><rect x="9" y="9" width="1" height="1" fill="#c6c6c6"/></svg>
<svg class="a" style="left:1117px;top:167px;" width="10" height="11" viewBox="0 0 10 11"><rect x="0" y="0" width="10" height="11" fill="#777"/><rect x="1" y="1" width="1" height="1" fill="#c6c6c6"/><rect x="1" y="3" width="1" height="1" fill="#c6c6c6"/><rect x="1" y="5" width="1" height="1" fill="#c6c6c6"/><rect x="1" y="7" width="1" height="1" fill="#c6c6c6"/><rect x="1" y="9" width="1" height="1" fill="#c6c6c6"/><rect x="3" y="1" width="1" height="1" fill="#c6c6c6"/><rect x="3" y="3" width="1" height="1" fill="#c6c6c6"/><rect x="3" y="5" width="1" height="1" fill="#c6c6c6"/><rect x="3" y="7" width="1" height="1" fill="#c6c6c6"/><rect x="3" y="9" width="1" height="1" fill="#c6c6c6"/><rect x="5" y="1" width="1" height="1" fill="#c6c6c6"/><rect x="5" y="3" width="1" height="1" fill="#c6c6c6"/><rect x="5" y="5" width="1" height="1" fill="#c6c6c6"/><rect x="5" y="7" width="1" height="1" fill="#c6c6c6"/><rect x="5" y="9" width="1" height="1" fill="#c6c6c6"/><rect x="7" y="1" width="1" height="1" fill="#c6c6c6"/><rect x="7" y="3" width="1" height="1" fill="#c6c6c6"/><rect x="7" y="5" width="1" height="1" fill="#c6c6c6"/><rect x="7" y="7" width="1" height="1" fill="#c6c6c6"/><rect x="7" y="9" width="1" height="1" fill="#c6c6c6"/><rect x="9" y="1" width="1" height="1" fill="#c6c6c6"/><rect x="9" y="3" width="1" height="1" fill="#c6c6c6"/><rect x="9" y="5" width="1" height="1" fill="#c6c6c6"/><rect x="9" y="7" width="1" height="1" fill="#c6c6c6"/><rect x="9" y="9" width="1" height="1" fill="#c6c6c6"/></svg>
<svg class="a" style="left:1611px;top:167px;" width="10" height="11" viewBox="0 0 10 11"><rect x="0" y="0" width="10" height="11" fill="#777"/><rect x="1" y="1" width="1" height="1" fill="#c6c6c6"/><rect x="1" y="3" width="1" height="1" fill="#c6c6c6"/><rect x="1" y="5" width="1" height="1" fill="#c6c6c6"/><rect x="1" y="7" width="1" height="1" fill="#c6c6c6"/><rect x="1" y="9" width="1" height="1" fill="#c6c6c6"/><rect x="3" y="1" width="1" height="1" fill="#c6c6c6"/><rect x="3" y="3" width="1" height="1" fill="#c6c6c6"/><rect x="3" y="5" width="1" height="1" fill="#c6c6c6"/><rect x="3" y="7" width="1" height="1" fill="#c6c6c6"/><rect x="3" y="9" width="1" height="1" fill="#c6c6c6"/><rect x="5" y="1" width="1" height="1" fill="#c6c6c6"/><rect x="5" y="3" width="1" height="1" fill="#c6c6c6"/><rect x="5" y="5" width="1" height="1" fill="#c6c6c6"/><rect x="5" y="7" width="1" height="1" fill="#c6c6c6"/><rect x="5" y="9" width="1" height="1" fill="#c6c6c6"/><rect x="7" y="1" width="1" height="1" fill="#c6c6c6"/><rect x="7" y="3" width="1" height="1" fill="#c6c6c6"/><rect x="7" y="5" width="1" height="1" fill="#c6c6c6"/><rect x="7" y="7" width="1" height="1" fill="#c6c6c6"/><rect x="7" y="9" width="1" height="1" fill="#c6c6c6"/><rect x="9" y="1" width="1" height="1" fill="#c6c6c6"/><rect x="9" y="3" width="1" height="1" fill="#c6c6c6"/><rect x="9" y="5" width="1" height="1" fill="#c6c6c6"/><rect x="9" y="7" width="1" height="1" fill="#c6c6c6"/><rect x="9" y="9" width="1" height="1" fill="#c6c6c6"/></svg>
<svg class="a" style="left:810px;top:164px;" width="950" height="16" viewBox="0 0 950 16"><rect x="7.5" y="6" width="1.3" height="6" fill="#444"/><rect x="29.8" y="6" width="1.3" height="6" fill="#444"/><rect x="52.1" y="6" width="1.3" height="6" fill="#444"/><text x="41.6" y="12" font-size="10.5" font-weight="bold" font-family="Liberation Sans" fill="#555" text-anchor="middle">6</text><rect x="74.4" y="6" width="1.3" height="6" fill="#444"/><rect x="96.7" y="6" width="1.3" height="6" fill="#444"/><text x="86.2" y="12" font-size="10.5" font-weight="bold" font-family="Liberation Sans" fill="#555" text-anchor="middle">4</text><rect x="119.0" y="6" width="1.3" height="6" fill="#444"/><rect x="141.3" y="6" width="1.3" height="6" fill="#444"/><text x="130.8" y="12" font-size="10.5" font-weight="bold" font-family="Liberation Sans" fill="#555" text-anchor="middle">2</text><rect x="185.9" y="6" width="1.3" height="6" fill="#444"/><rect x="208.3" y="6" width="1.3" height="6" fill="#444"/><rect x="230.6" y="6" width="1.3" height="6" fill="#444"/><text x="220.0" y="12" font-size="10.5" font-weight="bold" font-family="Liberation Sans" fill="#555" text-anchor="middle">2</text><rect x="252.8" y="6" width="1.3" height="6" fill="#444"/><rect x="275.1" y="6" width="1.3" height="6" fill="#444"/><text x="264.6" y="12" font-size="10.5" font-weight="bold" font-family="Liberation Sans" fill="#555" text-anchor="middle">4</text><rect x="297.4" y="6" width="1.3" height="6" fill="#444"/><rect x="342.0" y="6" width="1.3" height="6" fill="#444"/><rect x="364.4" y="6" width="1.3" height="6" fill="#444"/><text x="353.8" y="12" font-size="10.5" font-weight="bold" font-family="Liberation Sans" fill="#555" text-anchor="middle">8</text><rect x="386.6" y="6" width="1.3" height="6" fill="#444"/><rect x="409.0" y="6" width="1.3" height="6" fill="#444"/><text x="398.4" y="12" font-size="10.5" font-weight="bold" font-family="Liberation Sans" fill="#555" text-anchor="middle">10</text><rect x="431.2" y="6" width="1.3" height="6" fill="#444"/><rect x="453.6" y="6" width="1.3" height="6" fill="#444"/><text x="443.0" y="12" font-size="10.5" font-weight="bold" font-family="Liberation Sans" fill="#555" text-anchor="middle">12</text><rect x="475.8" y="6" width="1.3" height="6" fill="#444"/><rect x="498.1" y="6" width="1.3" height="6" fill="#444"/><text x="487.6" y="12" font-size="10.5" font-weight="bold" font-family="Liberation Sans" fill="#555" text-anchor="middle">14</text><rect x="520.4" y="6" width="1.3" height="6" fill="#444"/><rect x="542.8" y="6" width="1.3" height="6" fill="#444"/><text x="532.2" y="12" font-size="10.5" font-weight="bold" font-family="Liberation Sans" fill="#555" text-anchor="middle">16</text><rect x="565.0" y="6" width="1.3" height="6" fill="#444"/><rect x="587.4" y="6" width="1.3" height="6" fill="#444"/><text x="576.8" y="12" font-size="10.5" font-weight="bold" font-family="Liberation Sans" fill="#555" text-anchor="middle">18</text><rect x="609.6" y="6" width="1.3" height="6" fill="#444"/><rect x="632.0" y="6" width="1.3" height="6" fill="#444"/><text x="621.4" y="12" font-size="10.5" font-weight="bold" font-family="Liberation Sans" fill="#555" text-anchor="middle">20</text><rect x="654.2" y="6" width="1.3" height="6" fill="#444"/><rect x="676.6" y="6" width="1.3" height="6" fill="#444"/><text x="666.0" y="12" font-size="10.5" font-weight="bold" font-family="Liberation Sans" fill="#555" text-anchor="middle">22</text><rect x="698.8" y="6" width="1.3" height="6" fill="#444"/><rect x="721.1" y="6" width="1.3" height="6" fill="#444"/><text x="710.6" y="12" font-size="10.5" font-weight="bold" font-family="Liberation Sans" fill="#555" text-anchor="middle">24</text><rect x="743.4" y="6" width="1.3" height="6" fill="#444"/><rect x="765.8" y="6" width="1.3" height="6" fill="#444"/><text x="755.2" y="12" font-size="10.5" font-weight="bold" font-family="Liberation Sans" fill="#555" text-anchor="middle">26</text><rect x="788.0" y="6" width="1.3" height="6" fill="#444"/><text x="799.8" y="12" font-size="10.5" font-weight="bold" font-family="Liberation Sans" fill="#555" text-anchor="middle">28</text><rect x="832.6" y="6" width="1.3" height="6" fill="#444"/><rect x="855.0" y="6" width="1.3" height="6" fill="#444"/><text x="844.4" y="12" font-size="10.5" font-weight="bold" font-family="Liberation Sans" fill="#555" text-anchor="middle">30</text><rect x="877.2" y="6" width="1.3" height="6" fill="#444"/><rect x="899.6" y="6" width="1.3" height="6" fill="#444"/><text x="889.0" y="12" font-size="10.5" font-weight="bold" font-family="Liberation Sans" fill="#555" text-anchor="middle">32</text><rect x="921.8" y="6" width="1.3" height="6" fill="#444"/><rect x="944.1" y="6" width="1.3" height="6" fill="#444"/><text x="933.6" y="12" font-size="10.5" font-weight="bold" font-family="Liberation Sans" fill="#555" text-anchor="middle">34</text></svg>
<div class="a" style="left:5px;top:189px;width:17px;height:980px;background:#fff"></div>
<div class="a" style="left:5px;top:189px;width:17px;height:74.5px;background:#c6c6c6"></div>
<svg class="a" style="left:5px;top:189px;" width="17" height="980" viewBox="0 0 17 980"><rect x="7.5" y="8.9" width="5.5" height="1.3" fill="#444"/><rect x="7.5" y="33.8" width="5.5" height="1.3" fill="#444"/><text transform="translate(13.2 22.0) rotate(-90)" x="0" y="0" font-size="10" font-family="Liberation Sans" fill="#444" text-anchor="middle">2</text><rect x="7.5" y="58.8" width="5.5" height="1.3" fill="#444"/><text transform="translate(13.2 46.9) rotate(-90)" x="0" y="0" font-size="10" font-family="Liberation Sans" fill="#444" text-anchor="middle">1</text><rect x="7.5" y="83.7" width="5.5" height="1.3" fill="#444"/><rect x="7.5" y="108.7" width="5.5" height="1.3" fill="#444"/><text transform="translate(13.2 96.8) rotate(-90)" x="0" y="0" font-size="10" font-family="Liberation Sans" fill="#444" text-anchor="middle">1</text><rect x="7.5" y="133.6" width="5.5" height="1.3" fill="#444"/><text transform="translate(13.2 121.8) rotate(-90)" x="0" y="0" font-size="10" font-family="Liberation Sans" fill="#444" text-anchor="middle">2</text><rect x="7.5" y="158.6" width="5.5" height="1.3" fill="#444"/><text transform="translate(13.2 146.7) rotate(-90)" x="0" y="0" font-size="10" font-family="Liberation Sans" fill="#444" text-anchor="middle">3</text><rect x="7.5" y="183.5" width="5.5" height="1.3" fill="#444"/><text transform="translate(13.2 171.7) rotate(-90)" x="0" y="0" font-size="10" font-family="Liberation Sans" fill="#444" text-anchor="middle">4</text><rect x="7.5" y="208.5" width="5.5" height="1.3" fill="#444"/><text transform="translate(13.2 196.6) rotate(-90)" x="0" y="0" font-size="10" font-family="Liberation Sans" fill="#444" text-anchor="middle">5</text><rect x="7.5" y="233.4" width="5.5" height="1.3" fill="#444"/><text transform="translate(13.2 221.6) rotate(-90)" x="0" y="0" font-size="10" font-family="Liberation Sans" fill="#444" text-anchor="middle">6</text><rect x="7.5" y="258.4" width="5.5" height="1.3" fill="#444"/><text transform="translate(13.2 246.5) rotate(-90)" x="0" y="0" font-size="10" font-family="Liberation Sans" fill="#444" text-anchor="middle">7</text><rect x="7.5" y="283.3" width="5.5" height="1.3" fill="#444"/><text transform="translate(13.2 271.5) rotate(-90)" x="0" y="0" font-size="10" font-family="Liberation Sans" fill="#444" text-anchor="middle">8</text><rect x="7.5" y="308.3" width="5.5" height="1.3" fill="#444"/><text transform="translate(13.2 296.4) rotate(-90)" x="0" y="0" font-size="10" font-family="Liberation Sans" fill="#444" text-anchor="middle">9</text><rect x="7.5" y="333.2" width="5.5" height="1.3" fill="#444"/><text transform="translate(13.2 321.4) rotate(-90)" x="0" y="0" font-size="10" font-family="Liberation Sans" fill="#444" text-anchor="middle">10</text><rect x="7.5" y="358.2" width="5.5" height="1.3" fill="#444"/><text transform="translate(13.2 346.3) rotate(-90)" x="0" y="0" font-size="10" font-family="Liberation Sans" fill="#444" text-anchor="middle">11</text><rect x="7.5" y="383.1" width="5.5" height="1.3" fill="#444"/><text transform="translate(13.2 371.2) rotate(-90)" x="0" y="0" font-size="10" font-family="Liberation Sans" fill="#444" text-anchor="middle">12</text><rect x="7.5" y="408.1" width="5.5" height="1.3" fill="#444"/><text transform="translate(13.2 396.2) rotate(-90)" x="0" y="0" font-size="10" font-family="Liberation Sans" fill="#444" text-anchor="middle">13</text><rect x="7.5" y="433.0" width="5.5" height="1.3" fill="#444"/><text transform="translate(13.2 421.2) rotate(-90)" x="0" y="0" font-size="10" font-family="Liberation Sans" fill="#444" text-anchor="middle">14</text><rect x="7.5" y="458.0" width="5.5" height="1.3" fill="#444"/><text transform="translate(13.2 446.1) rotate(-90)" x="0" y="0" font-size="10" font-family="Liberation Sans" fill="#444" text-anchor="middle">15</text><rect x="7.5" y="482.9" width="5.5" height="1.3" fill="#444"/><text transform="translate(13.2 471.0) rotate(-90)" x="0" y="0" font-size="10" font-family="Liberation Sans" fill="#444" text-anchor="middle">16</text><rect x="7.5" y="507.9" width="5.5" height="1.3" fill="#444"/><text transform="translate(13.2 496.0) rotate(-90)" x="0" y="0" font-size="10" font-family="Liberation Sans" fill="#444" text-anchor="middle">17</text><rect x="7.5" y="532.8" width="5.5" height="1.3" fill="#444"/><text transform="translate(13.2 521.0) rotate(-90)" x="0" y="0" font-size="10" font-family="Liberation Sans" fill="#444" text-anchor="middle">18</text><rect x="7.5" y="557.8" width="5.5" height="1.3" fill="#444"/><text transform="translate(13.2 545.9) rotate(-90)" x="0" y="0" font-size="10" font-family="Liberation Sans" fill="#444" text-anchor="middle">19</text><rect x="7.5" y="582.7" width="5.5" height="1.3" fill="#444"/><text transform="translate(13.2 570.9) rotate(-90)" x="0" y="0" font-size="10" font-family="Liberation Sans" fill="#444" text-anchor="middle">20</text><rect x="7.5" y="607.7" width="5.5" height="1.3" fill="#444"/><text transform="translate(13.2 595.8) rotate(-90)" x="0" y="0" font-size="10" font-family="Liberation Sans" fill="#444" text-anchor="middle">21</text><rect x="7.5" y="632.6" width="5.5" height="1.3" fill="#444"/><text transform="translate(13.2 620.8) rotate(-90)" x="0" y="0" font-size="10" font-family="Liberation Sans" fill="#444" text-anchor="middle">22</text><rect x="7.5" y="657.6" width="5.5" height="1.3" fill="#444"/><text transform="translate(13.2 645.7) rotate(-90)" x="0" y="0" font-size="10" font-family="Liberation Sans" fill="#444" text-anchor="middle">23</text><rect x="7.5" y="682.5" width="5.5" height="1.3" fill="#444"/><text transform="translate(13.2 670.6) rotate(-90)" x="0" y="0" font-size="10" font-family="Liberation Sans" fill="#444" text-anchor="middle">24</text><rect x="7.5" y="707.5" width="5.5" height="1.3" fill="#444"/><text transform="translate(13.2 695.6) rotate(-90)" x="0" y="0" font-size="10" font-family="Liberation Sans" fill="#444" text-anchor="middle">25</text><rect x="7.5" y="732.4" width="5.5" height="1.3" fill="#444"/><text transform="translate(13.2 720.5) rotate(-90)" x="0" y="0" font-size="10" font-family="Liberation Sans" fill="#444" text-anchor="middle">26</text><rect x="7.5" y="757.4" width="5.5" height="1.3" fill="#444"/><text transform="translate(13.2 745.5) rotate(-90)" x="0" y="0" font-size="10" font-family="Liberation Sans" fill="#444" text-anchor="middle">27</text><rect x="7.5" y="782.3" width="5.5" height="1.3" fill="#444"/><text transform="translate(13.2 770.5) rotate(-90)" x="0" y="0" font-size="10" font-family="Liberation Sans" fill="#444" text-anchor="middle">28</text><rect x="7.5" y="807.3" width="5.5" height="1.3" fill="#444"/><text transform="translate(13.2 795.4) rotate(-90)" x="0" y="0" font-size="10" font-family="Liberation Sans" fill="#444" text-anchor="middle">29</text><rect x="7.5" y="832.2" width="5.5" height="1.3" fill="#444"/><text transform="translate(13.2 820.4) rotate(-90)" x="0" y="0" font-size="10" font-family="Liberation Sans" fill="#444" text-anchor="middle">30</text><rect x="7.5" y="857.2" width="5.5" height="1.3" fill="#444"/><text transform="translate(13.2 845.3) rotate(-90)" x="0" y="0" font-size="10" font-family="Liberation Sans" fill="#444" text-anchor="middle">31</text><rect x="7.5" y="882.1" width="5.5" height="1.3" fill="#444"/><text transform="translate(13.2 870.2) rotate(-90)" x="0" y="0" font-size="10" font-family="Liberation Sans" fill="#444" text-anchor="middle">32</text><rect x="7.5" y="907.1" width="5.5" height="1.3" fill="#444"/><text transform="translate(13.2 895.2) rotate(-90)" x="0" y="0" font-size="10" font-family="Liberation Sans" fill="#444" text-anchor="middle">33</text><rect x="7.5" y="932.0" width="5.5" height="1.3" fill="#444"/><text transform="translate(13.2 920.2) rotate(-90)" x="0" y="0" font-size="10" font-family="Liberation Sans" fill="#444" text-anchor="middle">34</text><rect x="7.5" y="957.0" width="5.5" height="1.3" fill="#444"/><text transform="translate(13.2 945.1) rotate(-90)" x="0" y="0" font-size="10" font-family="Liberation Sans" fill="#444" text-anchor="middle">35</text><text transform="translate(13.2 970.0) rotate(-90)" x="0" y="0" font-size="10" font-family="Liberation Sans" fill="#444" text-anchor="middle">36</text><rect x="0" y="620.7" width="17" height="7.5" fill="#c8c8c8"/><rect x="0" y="695.2" width="17" height="7.5" fill="#c8c8c8"/><rect x="0" y="769.7" width="17" height="7.5" fill="#c8c8c8"/><rect x="0" y="844.2" width="17" height="7.5" fill="#c8c8c8"/><rect x="0" y="918.7" width="17" height="7.5" fill="#c8c8c8"/></svg>
<div class="a" style="left:954px;top:233px;width:1px;height:29px;background:#8c8c8c"></div>
<div class="a" style="left:927px;top:261px;width:28px;height:1px;background:#8c8c8c"></div>
<div class="a" style="left:1618px;top:233px;width:1px;height:29px;background:#8c8c8c"></div>
<div class="a" style="left:1618px;top:261px;width:28px;height:1px;background:#8c8c8c"></div>
<div class="a" style="left:1036.5px;top:383px;width:120px;text-align:center;font-size:84px;line-height:84px;color:#000">课</div>
<div class="a" style="left:1163.5px;top:383px;width:120px;text-align:center;font-size:84px;line-height:84px;color:#000">程</div>
<div class="a" style="left:1290.5px;top:383px;width:120px;text-align:center;font-size:84px;line-height:84px;color:#000">论</div>
<div class="a" style="left:1417.5px;top:383px;width:120px;text-align:center;font-size:84px;line-height:84px;color:#000">文</div>
<div class="a" style="left:1001.0px;top:612.0px;font-size:25.6px;line-height:25.6px;color:#000;">题</div>
<div class="a" style="left:1066.0px;top:612.0px;font-size:25.6px;line-height:25.6px;color:#000;">目</div>
<div class="a" style="left:1103.5px;top:614.5px;font-family:'Liberation Mono',monospace;font-size:29.5px;line-height:25.6px;color:#000;-webkit-text-stroke:0.5px #000;transform-origin:0 0;transform:scaleX(0.7232)">OFFICER</div>
<div class="a" style="left:1201.0px;top:612.0px;font-size:25.6px;line-height:25.6px;color:#000;-webkit-text-stroke:0.4px #000;">帮</div>
<div class="a" style="left:1226.6px;top:612.0px;font-size:25.6px;line-height:25.6px;color:#000;-webkit-text-stroke:0.4px #000;">帮</div>
<div class="a" style="left:1252.2px;top:612.0px;font-size:25.6px;line-height:25.6px;color:#000;-webkit-text-stroke:0.4px #000;">忙</div>
<div class="a" style="left:1284.0px;top:614.5px;font-family:'Liberation Mono',monospace;font-size:29.5px;line-height:25.6px;color:#000;-webkit-text-stroke:0.5px #000;transform-origin:0 0;transform:scaleX(0.7232)">WORD</div>
<div class="a" style="left:1340.5px;top:612.0px;font-size:25.6px;line-height:25.6px;color:#000;-webkit-text-stroke:0.4px #000;">对</div>
<div class="a" style="left:1366.1px;top:612.0px;font-size:25.6px;line-height:25.6px;color:#000;-webkit-text-stroke:0.4px #000;">齐</div>
<div class="a" style="left:1391.7px;top:612.0px;font-size:25.6px;line-height:25.6px;color:#000;-webkit-text-stroke:0.4px #000;">下</div>
<div class="a" style="left:1417.3px;top:612.0px;font-size:25.6px;line-height:25.6px;color:#000;-webkit-text-stroke:0.4px #000;">划</div>
<div class="a" style="left:1442.9px;top:612.0px;font-size:25.6px;line-height:25.6px;color:#000;-webkit-text-stroke:0.4px #000;">线</div>
<div class="a" style="left:1468.5px;top:612.0px;font-size:25.6px;line-height:25.6px;color:#000;-webkit-text-stroke:0.4px #000;">应</div>
<div class="a" style="left:1494.1px;top:612.0px;font-size:25.6px;line-height:25.6px;color:#000;-webkit-text-stroke:0.4px #000;">用</div>
<div class="a" style="left:1519.7px;top:612.0px;font-size:25.6px;line-height:25.6px;color:#000;-webkit-text-stroke:0.4px #000;">研</div>
<div class="a" style="left:1545.3px;top:612.0px;font-size:25.6px;line-height:25.6px;color:#000;-webkit-text-stroke:0.4px #000;">究</div>
<div class="a" style="left:1570.9px;top:612.0px;font-size:25.6px;line-height:25.6px;color:#000;-webkit-text-stroke:0.4px #000;">二</div>
<div class="a" style="left:1101px;top:644.5px;width:500px;height:1.5px;background:#333"></div>
<div class="a" style="left:986.0px;top:761.0px;font-size:25.6px;line-height:25.6px;color:#000;">学</div>
<div class="a" style="left:1073.0px;top:761.0px;font-size:25.6px;line-height:25.6px;color:#000;">院</div>
<div class="a" style="left:1268.7px;top:763.5px;font-family:'Liberation Mono',monospace;font-size:29.5px;line-height:25.6px;color:#000;transform-origin:0 0;transform:scaleX(0.7232)">OFFICE</div>
<div class="a" style="left:1351.9px;top:761.0px;font-size:25.6px;line-height:25.6px;color:#000;">办</div>
<div class="a" style="left:1377.5px;top:761.0px;font-size:25.6px;line-height:25.6px;color:#000;">公</div>
<div class="a" style="left:1403.1px;top:761.0px;font-size:25.6px;line-height:25.6px;color:#000;">学</div>
<div class="a" style="left:1428.7px;top:761.0px;font-size:25.6px;line-height:25.6px;color:#000;">院</div>
<div class="a" style="left:986.0px;top:835.8px;font-size:25.6px;line-height:25.6px;color:#000;">专</div>
<div class="a" style="left:1015.0px;top:835.8px;font-size:25.6px;line-height:25.6px;color:#000;">业</div>
<div class="a" style="left:1044.0px;top:835.8px;font-size:25.6px;line-height:25.6px;color:#000;">年</div>
<div class="a" style="left:1073.0px;top:835.8px;font-size:25.6px;line-height:25.6px;color:#000;">级</div>
<div class="a" style="left:1281.5px;top:838.3px;font-family:'Liberation Mono',monospace;font-size:29.5px;line-height:25.6px;color:#000;transform-origin:0 0;transform:scaleX(0.7232)">OFFICE</div>
<div class="a" style="left:1364.7px;top:835.8px;font-size:25.6px;line-height:25.6px;color:#000;">帮</div>
<div class="a" style="left:1390.3px;top:835.8px;font-size:25.6px;line-height:25.6px;color:#000;">帮</div>
<div class="a" style="left:1415.9px;top:835.8px;font-size:25.6px;line-height:25.6px;color:#000;">忙</div>
<div class="a" style="left:986.0px;top:910.6px;font-size:25.6px;line-height:25.6px;color:#000;">学</div>
<div class="a" style="left:1015.0px;top:910.6px;font-size:25.6px;line-height:25.6px;color:#000;">生</div>
<div class="a" style="left:1044.0px;top:910.6px;font-size:25.6px;line-height:25.6px;color:#000;">姓</div>
<div class="a" style="left:1073.0px;top:910.6px;font-size:25.6px;line-height:25.6px;color:#000;">名</div>
<div class="a" style="left:1281.5px;top:913.1px;font-family:'Liberation Mono',monospace;font-size:29.5px;line-height:25.6px;color:#000;transform-origin:0 0;transform:scaleX(0.7232)">OFFICE</div>
<div class="a" style="left:1364.7px;top:910.6px;font-size:25.6px;line-height:25.6px;color:#000;">帮</div>
<div class="a" style="left:1390.3px;top:910.6px;font-size:25.6px;line-height:25.6px;color:#000;">帮</div>
<div class="a" style="left:1415.9px;top:910.6px;font-size:25.6px;line-height:25.6px;color:#000;">忙</div>
<div class="a" style="left:986.0px;top:985.4px;font-size:25.6px;line-height:25.6px;color:#000;">指</div>
<div class="a" style="left:1015.0px;top:985.4px;font-size:25.6px;line-height:25.6px;color:#000;">导</div>
<div class="a" style="left:1044.0px;top:985.4px;font-size:25.6px;line-height:25.6px;color:#000;">教</div>
<div class="a" style="left:1073.0px;top:985.4px;font-size:25.6px;line-height:25.6px;color:#000;">师</div>
<div class="a" style="left:1255.9px;top:987.9px;font-family:'Liberation Mono',monospace;font-size:29.5px;line-height:25.6px;color:#000;transform-origin:0 0;transform:scaleX(0.7232)">OFFICE</div>
<div class="a" style="left:1339.1px;top:985.4px;font-size:25.6px;line-height:25.6px;color:#000;">帮</div>
<div class="a" style="left:1364.7px;top:985.4px;font-size:25.6px;line-height:25.6px;color:#000;">帮</div>
<div class="a" style="left:1390.3px;top:985.4px;font-size:25.6px;line-height:25.6px;color:#000;">忙</div>
<div class="a" style="left:1415.9px;top:985.4px;font-size:25.6px;line-height:25.6px;color:#000;">帮</div>
<div class="a" style="left:1441.5px;top:985.4px;font-size:25.6px;line-height:25.6px;color:#000;">帮</div>
<div class="a" style="left:986.0px;top:1060.2px;font-size:25.6px;line-height:25.6px;color:#000;">设</div>
<div class="a" style="left:1015.0px;top:1060.2px;font-size:25.6px;line-height:25.6px;color:#000;">计</div>
<div class="a" style="left:1044.0px;top:1060.2px;font-size:25.6px;line-height:25.6px;color:#000;">地</div>
<div class="a" style="left:1073.0px;top:1060.2px;font-size:25.6px;line-height:25.6px;color:#000;">点</div>
<div class="a" style="left:1294.3px;top:1062.7px;font-family:'Liberation Mono',monospace;font-size:29.5px;line-height:25.6px;color:#000;transform-origin:0 0;transform:scaleX(0.7232)">OFFICE</div>
<div class="a" style="left:1377.5px;top:1060.2px;font-size:25.6px;line-height:25.6px;color:#000;">办</div>
<div class="a" style="left:1403.1px;top:1060.2px;font-size:25.6px;line-height:25.6px;color:#000;">公</div>
<div class="a" style="left:974px;top:746px;width:590px;height:361px;border:3px solid #e0393f"></div>
<div class="a" style="left:657px;top:129px;width:146px;height:398px;background:#fff;border:1px solid #c6c6c6;box-shadow:1px 1px 2px rgba(0,0,0,0.08)"></div>
<div class="a" style="left:658px;top:228px;width:143px;height:25px;background:#c5c5c5"></div>
<svg class="a" style="left:661px;top:133px;shape-rendering:crispEdges" width="20" height="20" viewBox="0 0 20 20"><rect x="0" y="0" width="20" height="20" fill="#c6c6c6"/><rect x="3" y="3" width="14" height="14" fill="#fff"/><rect x="3" y="3" width="1" height="1" fill="#555"/><rect x="5" y="3" width="1" height="1" fill="#555"/><rect x="7" y="3" width="1" height="1" fill="#555"/><rect x="9" y="3" width="1" height="1" fill="#555"/><rect x="11" y="3" width="1" height="1" fill="#555"/><rect x="13" y="3" width="1" height="1" fill="#555"/><rect x="15" y="3" width="1" height="1" fill="#555"/><rect x="3" y="16" width="1" height="1" fill="#3a3a3a"/><rect x="4" y="16" width="1" height="1" fill="#3a3a3a"/><rect x="5" y="16" width="1" height="1" fill="#3a3a3a"/><rect x="6" y="16" width="1" height="1" fill="#3a3a3a"/><rect x="7" y="16" width="1" height="1" fill="#3a3a3a"/><rect x="8" y="16" width="1" height="1" fill="#3a3a3a"/><rect x="9" y="16" width="1" height="1" fill="#3a3a3a"/><rect x="10" y="16" width="1" height="1" fill="#3a3a3a"/><rect x="11" y="16" width="1" height="1" fill="#3a3a3a"/><rect x="12" y="16" width="1" height="1" fill="#3a3a3a"/><rect x="13" y="16" width="1" height="1" fill="#3a3a3a"/><rect x="14" y="16" width="1" height="1" fill="#3a3a3a"/><rect x="15" y="16" width="1" height="1" fill="#3a3a3a"/><rect x="16" y="16" width="1" height="1" fill="#3a3a3a"/><rect x="3" y="3" width="1" height="1" fill="#555"/><rect x="3" y="5" width="1" height="1" fill="#555"/><rect x="3" y="7" width="1" height="1" fill="#555"/><rect x="3" y="9" width="1" height="1" fill="#555"/><rect x="3" y="11" width="1" height="1" fill="#555"/><rect x="3" y="13" width="1" height="1" fill="#555"/><rect x="3" y="15" width="1" height="1" fill="#555"/><rect x="16" y="4" width="1" height="1" fill="#555"/><rect x="16" y="6" width="1" height="1" fill="#555"/><rect x="16" y="8" width="1" height="1" fill="#555"/><rect x="16" y="10" width="1" height="1" fill="#555"/><rect x="16" y="12" width="1" height="1" fill="#555"/><rect x="16" y="14" width="1" height="1" fill="#555"/><rect x="16" y="16" width="1" height="1" fill="#555"/><rect x="3" y="9" width="1" height="1" fill="#555"/><rect x="5" y="9" width="1" height="1" fill="#555"/><rect x="7" y="9" width="1" height="1" fill="#555"/><rect x="9" y="9" width="1" height="1" fill="#555"/><rect x="11" y="9" width="1" height="1" fill="#555"/><rect x="13" y="9" width="1" height="1" fill="#555"/><rect x="15" y="9" width="1" height="1" fill="#555"/><rect x="9" y="3" width="1" height="1" fill="#555"/><rect x="9" y="5" width="1" height="1" fill="#555"/><rect x="9" y="7" width="1" height="1" fill="#555"/><rect x="9" y="9" width="1" height="1" fill="#555"/><rect x="9" y="11" width="1" height="1" fill="#555"/><rect x="9" y="13" width="1" height="1" fill="#555"/><rect x="9" y="15" width="1" height="1" fill="#555"/></svg>
<svg class="a" style="left:661px;top:157px;shape-rendering:crispEdges" width="20" height="20" viewBox="0 0 20 20"><rect x="0" y="0" width="20" height="20" fill="#c6c6c6"/><rect x="3" y="3" width="14" height="14" fill="#fff"/><rect x="3" y="3" width="1" height="1" fill="#3a3a3a"/><rect x="4" y="3" width="1" height="1" fill="#3a3a3a"/><rect x="5" y="3" width="1" height="1" fill="#3a3a3a"/><rect x="6" y="3" width="1" height="1" fill="#3a3a3a"/><rect x="7" y="3" width="1" height="1" fill="#3a3a3a"/><rect x="8" y="3" width="1" height="1" fill="#3a3a3a"/><rect x="9" y="3" width="1" height="1" fill="#3a3a3a"/><rect x="10" y="3" width="1" height="1" fill="#3a3a3a"/><rect x="11" y="3" width="1" height="1" fill="#3a3a3a"/><rect x="12" y="3" width="1" height="1" fill="#3a3a3a"/><rect x="13" y="3" width="1" height="1" fill="#3a3a3a"/><rect x="14" y="3" width="1" height="1" fill="#3a3a3a"/><rect x="15" y="3" width="1" height="1" fill="#3a3a3a"/><rect x="16" y="3" width="1" height="1" fill="#3a3a3a"/><rect x="4" y="16" width="1" height="1" fill="#555"/><rect x="6" y="16" width="1" height="1" fill="#555"/><rect x="8" y="16" width="1" height="1" fill="#555"/><rect x="10" y="16" width="1" height="1" fill="#555"/><rect x="12" y="16" width="1" height="1" fill="#555"/><rect x="14" y="16" width="1" height="1" fill="#555"/><rect x="16" y="16" width="1" height="1" fill="#555"/><rect x="3" y="3" width="1" height="1" fill="#555"/><rect x="3" y="5" width="1" height="1" fill="#555"/><rect x="3" y="7" width="1" height="1" fill="#555"/><rect x="3" y="9" width="1" height="1" fill="#555"/><rect x="3" y="11" width="1" height="1" fill="#555"/><rect x="3" y="13" width="1" height="1" fill="#555"/><rect x="3" y="15" width="1" height="1" fill="#555"/><rect x="16" y="4" width="1" height="1" fill="#555"/><rect x="16" y="6" width="1" height="1" fill="#555"/><rect x="16" y="8" width="1" height="1" fill="#555"/><rect x="16" y="10" width="1" height="1" fill="#555"/><rect x="16" y="12" width="1" height="1" fill="#555"/><rect x="16" y="14" width="1" height="1" fill="#555"/><rect x="16" y="16" width="1" height="1" fill="#555"/><rect x="3" y="9" width="1" height="1" fill="#555"/><rect x="5" y="9" width="1" height="1" fill="#555"/><rect x="7" y="9" width="1" height="1" fill="#555"/><rect x="9" y="9" width="1" height="1" fill="#555"/><rect x="11" y="9" width="1" height="1" fill="#555"/><rect x="13" y="9" width="1" height="1" fill="#555"/><rect x="15" y="9" width="1" height="1" fill="#555"/><rect x="9" y="3" width="1" height="1" fill="#555"/><rect x="9" y="5" width="1" height="1" fill="#555"/><rect x="9" y="7" width="1" height="1" fill="#555"/><rect x="9" y="9" width="1" height="1" fill="#555"/><rect x="9" y="11" width="1" height="1" fill="#555"/><rect x="9" y="13" width="1" height="1" fill="#555"/><rect x="9" y="15" width="1" height="1" fill="#555"/></svg>
<svg class="a" style="left:661px;top:181px;shape-rendering:crispEdges" width="20" height="20" viewBox="0 0 20 20"><rect x="0" y="0" width="20" height="20" fill="#c6c6c6"/><rect x="3" y="3" width="14" height="14" fill="#fff"/><rect x="3" y="3" width="1" height="1" fill="#555"/><rect x="5" y="3" width="1" height="1" fill="#555"/><rect x="7" y="3" width="1" height="1" fill="#555"/><rect x="9" y="3" width="1" height="1" fill="#555"/><rect x="11" y="3" width="1" height="1" fill="#555"/><rect x="13" y="3" width="1" height="1" fill="#555"/><rect x="15" y="3" width="1" height="1" fill="#555"/><rect x="4" y="16" width="1" height="1" fill="#555"/><rect x="6" y="16" width="1" height="1" fill="#555"/><rect x="8" y="16" width="1" height="1" fill="#555"/><rect x="10" y="16" width="1" height="1" fill="#555"/><rect x="12" y="16" width="1" height="1" fill="#555"/><rect x="14" y="16" width="1" height="1" fill="#555"/><rect x="16" y="16" width="1" height="1" fill="#555"/><rect x="3" y="3" width="1" height="1" fill="#3a3a3a"/><rect x="3" y="4" width="1" height="1" fill="#3a3a3a"/><rect x="3" y="5" width="1" height="1" fill="#3a3a3a"/><rect x="3" y="6" width="1" height="1" fill="#3a3a3a"/><rect x="3" y="7" width="1" height="1" fill="#3a3a3a"/><rect x="3" y="8" width="1" height="1" fill="#3a3a3a"/><rect x="3" y="9" width="1" height="1" fill="#3a3a3a"/><rect x="3" y="10" width="1" height="1" fill="#3a3a3a"/><rect x="3" y="11" width="1" height="1" fill="#3a3a3a"/><rect x="3" y="12" width="1" height="1" fill="#3a3a3a"/><rect x="3" y="13" width="1" height="1" fill="#3a3a3a"/><rect x="3" y="14" width="1" height="1" fill="#3a3a3a"/><rect x="3" y="15" width="1" height="1" fill="#3a3a3a"/><rect x="3" y="16" width="1" height="1" fill="#3a3a3a"/><rect x="16" y="4" width="1" height="1" fill="#555"/><rect x="16" y="6" width="1" height="1" fill="#555"/><rect x="16" y="8" width="1" height="1" fill="#555"/><rect x="16" y="10" width="1" height="1" fill="#555"/><rect x="16" y="12" width="1" height="1" fill="#555"/><rect x="16" y="14" width="1" height="1" fill="#555"/><rect x="16" y="16" width="1" height="1" fill="#555"/><rect x="3" y="9" width="1" height="1" fill="#555"/><rect x="5" y="9" width="1" height="1" fill="#555"/><rect x="7" y="9" width="1" height="1" fill="#555"/><rect x="9" y="9" width="1" height="1" fill="#555"/><rect x="11" y="9" width="1" height="1" fill="#555"/><rect x="13" y="9" width="1" height="1" fill="#555"/><rect x="15" y="9" width="1" height="1" fill="#555"/><rect x="9" y="3" width="1" height="1" fill="#555"/><rect x="9" y="5" width="1" height="1" fill="#555"/><rect x="9" y="7" width="1" height="1" fill="#555"/><rect x="9" y="9" width="1" height="1" fill="#555"/><rect x="9" y="11" width="1" height="1" fill="#555"/><rect x="9" y="13" width="1" height="1" fill="#555"/><rect x="9" y="15" width="1" height="1" fill="#555"/></svg>
<svg class="a" style="left:661px;top:205px;shape-rendering:crispEdges" width="20" height="20" viewBox="0 0 20 20"><rect x="0" y="0" width="20" height="20" fill="#c6c6c6"/><rect x="3" y="3" width="14" height="14" fill="#fff"/><rect x="3" y="3" width="1" height="1" fill="#555"/><rect x="5" y="3" width="1" height="1" fill="#555"/><rect x="7" y="3" width="1" height="1" fill="#555"/><rect x="9" y="3" width="1" height="1" fill="#555"/><rect x="11" y="3" width="1" height="1" fill="#555"/><rect x="13" y="3" width="1" height="1" fill="#555"/><rect x="15" y="3" width="1" height="1" fill="#555"/><rect x="4" y="16" width="1" height="1" fill="#555"/><rect x="6" y="16" width="1" height="1" fill="#555"/><rect x="8" y="16" width="1" height="1" fill="#555"/><rect x="10" y="16" width="1" height="1" fill="#555"/><rect x="12" y="16" width="1" height="1" fill="#555"/><rect x="14" y="16" width="1" height="1" fill="#555"/><rect x="16" y="16" width="1" height="1" fill="#555"/><rect x="3" y="3" width="1" height="1" fill="#555"/><rect x="3" y="5" width="1" height="1" fill="#555"/><rect x="3" y="7" width="1" height="1" fill="#555"/><rect x="3" y="9" width="1" height="1" fill="#555"/><rect x="3" y="11" width="1" height="1" fill="#555"/><rect x="3" y="13" width="1" height="1" fill="#555"/><rect x="3" y="15" width="1" height="1" fill="#555"/><rect x="16" y="3" width="1" height="1" fill="#3a3a3a"/><rect x="16" y="4" width="1" height="1" fill="#3a3a3a"/><rect x="16" y="5" width="1" height="1" fill="#3a3a3a"/><rect x="16" y="6" width="1" height="1" fill="#3a3a3a"/><rect x="16" y="7" width="1" height="1" fill="#3a3a3a"/><rect x="16" y="8" width="1" height="1" fill="#3a3a3a"/><rect x="16" y="9" width="1" height="1" fill="#3a3a3a"/><rect x="16" y="10" width="1" height="1" fill="#3a3a3a"/><rect x="16" y="11" width="1" height="1" fill="#3a3a3a"/><rect x="16" y="12" width="1" height="1" fill="#3a3a3a"/><rect x="16" y="13" width="1" height="1" fill="#3a3a3a"/><rect x="16" y="14" width="1" height="1" fill="#3a3a3a"/><rect x="16" y="15" width="1" height="1" fill="#3a3a3a"/><rect x="16" y="16" width="1" height="1" fill="#3a3a3a"/><rect x="3" y="9" width="1" height="1" fill="#555"/><rect x="5" y="9" width="1" height="1" fill="#555"/><rect x="7" y="9" width="1" height="1" fill="#555"/><rect x="9" y="9" width="1" height="1" fill="#555"/><rect x="11" y="9" width="1" height="1" fill="#555"/><rect x="13" y="9" width="1" height="1" fill="#555"/><rect x="15" y="9" width="1" height="1" fill="#555"/><rect x="9" y="3" width="1" height="1" fill="#555"/><rect x="9" y="5" width="1" height="1" fill="#555"/><rect x="9" y="7" width="1" height="1" fill="#555"/><rect x="9" y="9" width="1" height="1" fill="#555"/><rect x="9" y="11" width="1" height="1" fill="#555"/><rect x="9" y="13" width="1" height="1" fill="#555"/><rect x="9" y="15" width="1" height="1" fill="#555"/></svg>
<svg class="a" style="left:661px;top:229px;shape-rendering:crispEdges" width="20" height="20" viewBox="0 0 20 20"><rect x="3" y="3" width="14" height="14" fill="#fff"/><rect x="3" y="3" width="1" height="1" fill="#555"/><rect x="5" y="3" width="1" height="1" fill="#555"/><rect x="7" y="3" width="1" height="1" fill="#555"/><rect x="9" y="3" width="1" height="1" fill="#555"/><rect x="11" y="3" width="1" height="1" fill="#555"/><rect x="13" y="3" width="1" height="1" fill="#555"/><rect x="15" y="3" width="1" height="1" fill="#555"/><rect x="4" y="16" width="1" height="1" fill="#555"/><rect x="6" y="16" width="1" height="1" fill="#555"/><rect x="8" y="16" width="1" height="1" fill="#555"/><rect x="10" y="16" width="1" height="1" fill="#555"/><rect x="12" y="16" width="1" height="1" fill="#555"/><rect x="14" y="16" width="1" height="1" fill="#555"/><rect x="16" y="16" width="1" height="1" fill="#555"/><rect x="3" y="3" width="1" height="1" fill="#555"/><rect x="3" y="5" width="1" height="1" fill="#555"/><rect x="3" y="7" width="1" height="1" fill="#555"/><rect x="3" y="9" width="1" height="1" fill="#555"/><rect x="3" y="11" width="1" height="1" fill="#555"/><rect x="3" y="13" width="1" height="1" fill="#555"/><rect x="3" y="15" width="1" height="1" fill="#555"/><rect x="16" y="4" width="1" height="1" fill="#555"/><rect x="16" y="6" width="1" height="1" fill="#555"/><rect x="16" y="8" width="1" height="1" fill="#555"/><rect x="16" y="10" width="1" height="1" fill="#555"/><rect x="16" y="12" width="1" height="1" fill="#555"/><rect x="16" y="14" width="1" height="1" fill="#555"/><rect x="16" y="16" width="1" height="1" fill="#555"/><rect x="3" y="9" width="1" height="1" fill="#555"/><rect x="5" y="9" width="1" height="1" fill="#555"/><rect x="7" y="9" width="1" height="1" fill="#555"/><rect x="9" y="9" width="1" height="1" fill="#555"/><rect x="11" y="9" width="1" height="1" fill="#555"/><rect x="13" y="9" width="1" height="1" fill="#555"/><rect x="15" y="9" width="1" height="1" fill="#555"/><rect x="9" y="3" width="1" height="1" fill="#555"/><rect x="9" y="5" width="1" height="1" fill="#555"/><rect x="9" y="7" width="1" height="1" fill="#555"/><rect x="9" y="9" width="1" height="1" fill="#555"/><rect x="9" y="11" width="1" height="1" fill="#555"/><rect x="9" y="13" width="1" height="1" fill="#555"/><rect x="9" y="15" width="1" height="1" fill="#555"/></svg>
<svg class="a" style="left:661px;top:254px;shape-rendering:crispEdges" width="20" height="20" viewBox="0 0 20 20"><rect x="0" y="0" width="20" height="20" fill="#c6c6c6"/><rect x="3" y="3" width="14" height="14" fill="#fff"/><rect x="3" y="3" width="1" height="1" fill="#3a3a3a"/><rect x="4" y="3" width="1" height="1" fill="#3a3a3a"/><rect x="5" y="3" width="1" height="1" fill="#3a3a3a"/><rect x="6" y="3" width="1" height="1" fill="#3a3a3a"/><rect x="7" y="3" width="1" height="1" fill="#3a3a3a"/><rect x="8" y="3" width="1" height="1" fill="#3a3a3a"/><rect x="9" y="3" width="1" height="1" fill="#3a3a3a"/><rect x="10" y="3" width="1" height="1" fill="#3a3a3a"/><rect x="11" y="3" width="1" height="1" fill="#3a3a3a"/><rect x="12" y="3" width="1" height="1" fill="#3a3a3a"/><rect x="13" y="3" width="1" height="1" fill="#3a3a3a"/><rect x="14" y="3" width="1" height="1" fill="#3a3a3a"/><rect x="15" y="3" width="1" height="1" fill="#3a3a3a"/><rect x="16" y="3" width="1" height="1" fill="#3a3a3a"/><rect x="3" y="16" width="1" height="1" fill="#3a3a3a"/><rect x="4" y="16" width="1" height="1" fill="#3a3a3a"/><rect x="5" y="16" width="1" height="1" fill="#3a3a3a"/><rect x="6" y="16" width="1" height="1" fill="#3a3a3a"/><rect x="7" y="16" width="1" height="1" fill="#3a3a3a"/><rect x="8" y="16" width="1" height="1" fill="#3a3a3a"/><rect x="9" y="16" width="1" height="1" fill="#3a3a3a"/><rect x="10" y="16" width="1" height="1" fill="#3a3a3a"/><rect x="11" y="16" width="1" height="1" fill="#3a3a3a"/><rect x="12" y="16" width="1" height="1" fill="#3a3a3a"/><rect x="13" y="16" width="1" height="1" fill="#3a3a3a"/><rect x="14" y="16" width="1" height="1" fill="#3a3a3a"/><rect x="15" y="16" width="1" height="1" fill="#3a3a3a"/><rect x="16" y="16" width="1" height="1" fill="#3a3a3a"/><rect x="3" y="3" width="1" height="1" fill="#3a3a3a"/><rect x="3" y="4" width="1" height="1" fill="#3a3a3a"/><rect x="3" y="5" width="1" height="1" fill="#3a3a3a"/><rect x="3" y="6" width="1" height="1" fill="#3a3a3a"/><rect x="3" y="7" width="1" height="1" fill="#3a3a3a"/><rect x="3" y="8" width="1" height="1" fill="#3a3a3a"/><rect x="3" y="9" width="1" height="1" fill="#3a3a3a"/><rect x="3" y="10" width="1" height="1" fill="#3a3a3a"/><rect x="3" y="11" width="1" height="1" fill="#3a3a3a"/><rect x="3" y="12" width="1" height="1" fill="#3a3a3a"/><rect x="3" y="13" width="1" height="1" fill="#3a3a3a"/><rect x="3" y="14" width="1" height="1" fill="#3a3a3a"/><rect x="3" y="15" width="1" height="1" fill="#3a3a3a"/><rect x="3" y="16" width="1" height="1" fill="#3a3a3a"/><rect x="16" y="3" width="1" height="1" fill="#3a3a3a"/><rect x="16" y="4" width="1" height="1" fill="#3a3a3a"/><rect x="16" y="5" width="1" height="1" fill="#3a3a3a"/><rect x="16" y="6" width="1" height="1" fill="#3a3a3a"/><rect x="16" y="7" width="1" height="1" fill="#3a3a3a"/><rect x="16" y="8" width="1" height="1" fill="#3a3a3a"/><rect x="16" y="9" width="1" height="1" fill="#3a3a3a"/><rect x="16" y="10" width="1" height="1" fill="#3a3a3a"/><rect x="16" y="11" width="1" height="1" fill="#3a3a3a"/><rect x="16" y="12" width="1" height="1" fill="#3a3a3a"/><rect x="16" y="13" width="1" height="1" fill="#3a3a3a"/><rect x="16" y="14" width="1" height="1" fill="#3a3a3a"/><rect x="16" y="15" width="1" height="1" fill="#3a3a3a"/><rect x="16" y="16" width="1" height="1" fill="#3a3a3a"/><rect x="3" y="9" width="1" height="1" fill="#3a3a3a"/><rect x="4" y="9" width="1" height="1" fill="#3a3a3a"/><rect x="5" y="9" width="1" height="1" fill="#3a3a3a"/><rect x="6" y="9" width="1" height="1" fill="#3a3a3a"/><rect x="7" y="9" width="1" height="1" fill="#3a3a3a"/><rect x="8" y="9" width="1" height="1" fill="#3a3a3a"/><rect x="9" y="9" width="1" height="1" fill="#3a3a3a"/><rect x="10" y="9" width="1" height="1" fill="#3a3a3a"/><rect x="11" y="9" width="1" height="1" fill="#3a3a3a"/><rect x="12" y="9" width="1" height="1" fill="#3a3a3a"/><rect x="13" y="9" width="1" height="1" fill="#3a3a3a"/><rect x="14" y="9" width="1" height="1" fill="#3a3a3a"/><rect x="15" y="9" width="1" height="1" fill="#3a3a3a"/><rect x="16" y="9" width="1" height="1" fill="#3a3a3a"/><rect x="9" y="3" width="1" height="1" fill="#3a3a3a"/><rect x="9" y="4" width="1" height="1" fill="#3a3a3a"/><rect x="9" y="5" width="1" height="1" fill="#3a3a3a"/><rect x="9" y="6" width="1" height="1" fill="#3a3a3a"/><rect x="9" y="7" width="1" height="1" fill="#3a3a3a"/><rect x="9" y="8" width="1" height="1" fill="#3a3a3a"/><rect x="9" y="9" width="1" height="1" fill="#3a3a3a"/><rect x="9" y="10" width="1" height="1" fill="#3a3a3a"/><rect x="9" y="11" width="1" height="1" fill="#3a3a3a"/><rect x="9" y="12" width="1" height="1" fill="#3a3a3a"/><rect x="9" y="13" width="1" height="1" fill="#3a3a3a"/><rect x="9" y="14" width="1" height="1" fill="#3a3a3a"/><rect x="9" y="15" width="1" height="1" fill="#3a3a3a"/><rect x="9" y="16" width="1" height="1" fill="#3a3a3a"/></svg>
<svg class="a" style="left:661px;top:278px;shape-rendering:crispEdges" width="20" height="20" viewBox="0 0 20 20"><rect x="0" y="0" width="20" height="20" fill="#c6c6c6"/><rect x="3" y="3" width="14" height="14" fill="#fff"/><rect x="3" y="3" width="1" height="1" fill="#3a3a3a"/><rect x="4" y="3" width="1" height="1" fill="#3a3a3a"/><rect x="5" y="3" width="1" height="1" fill="#3a3a3a"/><rect x="6" y="3" width="1" height="1" fill="#3a3a3a"/><rect x="7" y="3" width="1" height="1" fill="#3a3a3a"/><rect x="8" y="3" width="1" height="1" fill="#3a3a3a"/><rect x="9" y="3" width="1" height="1" fill="#3a3a3a"/><rect x="10" y="3" width="1" height="1" fill="#3a3a3a"/><rect x="11" y="3" width="1" height="1" fill="#3a3a3a"/><rect x="12" y="3" width="1" height="1" fill="#3a3a3a"/><rect x="13" y="3" width="1" height="1" fill="#3a3a3a"/><rect x="14" y="3" width="1" height="1" fill="#3a3a3a"/><rect x="15" y="3" width="1" height="1" fill="#3a3a3a"/><rect x="16" y="3" width="1" height="1" fill="#3a3a3a"/><rect x="3" y="16" width="1" height="1" fill="#3a3a3a"/><rect x="4" y="16" width="1" height="1" fill="#3a3a3a"/><rect x="5" y="16" width="1" height="1" fill="#3a3a3a"/><rect x="6" y="16" width="1" height="1" fill="#3a3a3a"/><rect x="7" y="16" width="1" height="1" fill="#3a3a3a"/><rect x="8" y="16" width="1" height="1" fill="#3a3a3a"/><rect x="9" y="16" width="1" height="1" fill="#3a3a3a"/><rect x="10" y="16" width="1" height="1" fill="#3a3a3a"/><rect x="11" y="16" width="1" height="1" fill="#3a3a3a"/><rect x="12" y="16" width="1" height="1" fill="#3a3a3a"/><rect x="13" y="16" width="1" height="1" fill="#3a3a3a"/><rect x="14" y="16" width="1" height="1" fill="#3a3a3a"/><rect x="15" y="16" width="1" height="1" fill="#3a3a3a"/><rect x="16" y="16" width="1" height="1" fill="#3a3a3a"/><rect x="3" y="3" width="1" height="1" fill="#3a3a3a"/><rect x="3" y="4" width="1" height="1" fill="#3a3a3a"/><rect x="3" y="5" width="1" height="1" fill="#3a3a3a"/><rect x="3" y="6" width="1" height="1" fill="#3a3a3a"/><rect x="3" y="7" width="1" height="1" fill="#3a3a3a"/><rect x="3" y="8" width="1" height="1" fill="#3a3a3a"/><rect x="3" y="9" width="1" height="1" fill="#3a3a3a"/><rect x="3" y="10" width="1" height="1" fill="#3a3a3a"/><rect x="3" y="11" width="1" height="1" fill="#3a3a3a"/><rect x="3" y="12" width="1" height="1" fill="#3a3a3a"/><rect x="3" y="13" width="1" height="1" fill="#3a3a3a"/><rect x="3" y="14" width="1" height="1" fill="#3a3a3a"/><rect x="3" y="15" width="1" height="1" fill="#3a3a3a"/><rect x="3" y="16" width="1" height="1" fill="#3a3a3a"/><rect x="16" y="3" width="1" height="1" fill="#3a3a3a"/><rect x="16" y="4" width="1" height="1" fill="#3a3a3a"/><rect x="16" y="5" width="1" height="1" fill="#3a3a3a"/><rect x="16" y="6" width="1" height="1" fill="#3a3a3a"/><rect x="16" y="7" width="1" height="1" fill="#3a3a3a"/><rect x="16" y="8" width="1" height="1" fill="#3a3a3a"/><rect x="16" y="9" width="1" height="1" fill="#3a3a3a"/><rect x="16" y="10" width="1" height="1" fill="#3a3a3a"/><rect x="16" y="11" width="1" height="1" fill="#3a3a3a"/><rect x="16" y="12" width="1" height="1" fill="#3a3a3a"/><rect x="16" y="13" width="1" height="1" fill="#3a3a3a"/><rect x="16" y="14" width="1" height="1" fill="#3a3a3a"/><rect x="16" y="15" width="1" height="1" fill="#3a3a3a"/><rect x="16" y="16" width="1" height="1" fill="#3a3a3a"/><rect x="3" y="9" width="1" height="1" fill="#555"/><rect x="5" y="9" width="1" height="1" fill="#555"/><rect x="7" y="9" width="1" height="1" fill="#555"/><rect x="9" y="9" width="1" height="1" fill="#555"/><rect x="11" y="9" width="1" height="1" fill="#555"/><rect x="13" y="9" width="1" height="1" fill="#555"/><rect x="15" y="9" width="1" height="1" fill="#555"/><rect x="9" y="3" width="1" height="1" fill="#555"/><rect x="9" y="5" width="1" height="1" fill="#555"/><rect x="9" y="7" width="1" height="1" fill="#555"/><rect x="9" y="9" width="1" height="1" fill="#555"/><rect x="9" y="11" width="1" height="1" fill="#555"/><rect x="9" y="13" width="1" height="1" fill="#555"/><rect x="9" y="15" width="1" height="1" fill="#555"/></svg>
<svg class="a" style="left:661px;top:302px;shape-rendering:crispEdges" width="20" height="20" viewBox="0 0 20 20"><rect x="0" y="0" width="20" height="20" fill="#c6c6c6"/><rect x="3" y="3" width="14" height="14" fill="#fff"/><rect x="3" y="3" width="1" height="1" fill="#555"/><rect x="5" y="3" width="1" height="1" fill="#555"/><rect x="7" y="3" width="1" height="1" fill="#555"/><rect x="9" y="3" width="1" height="1" fill="#555"/><rect x="11" y="3" width="1" height="1" fill="#555"/><rect x="13" y="3" width="1" height="1" fill="#555"/><rect x="15" y="3" width="1" height="1" fill="#555"/><rect x="4" y="16" width="1" height="1" fill="#555"/><rect x="6" y="16" width="1" height="1" fill="#555"/><rect x="8" y="16" width="1" height="1" fill="#555"/><rect x="10" y="16" width="1" height="1" fill="#555"/><rect x="12" y="16" width="1" height="1" fill="#555"/><rect x="14" y="16" width="1" height="1" fill="#555"/><rect x="16" y="16" width="1" height="1" fill="#555"/><rect x="3" y="3" width="1" height="1" fill="#555"/><rect x="3" y="5" width="1" height="1" fill="#555"/><rect x="3" y="7" width="1" height="1" fill="#555"/><rect x="3" y="9" width="1" height="1" fill="#555"/><rect x="3" y="11" width="1" height="1" fill="#555"/><rect x="3" y="13" width="1" height="1" fill="#555"/><rect x="3" y="15" width="1" height="1" fill="#555"/><rect x="16" y="4" width="1" height="1" fill="#555"/><rect x="16" y="6" width="1" height="1" fill="#555"/><rect x="16" y="8" width="1" height="1" fill="#555"/><rect x="16" y="10" width="1" height="1" fill="#555"/><rect x="16" y="12" width="1" height="1" fill="#555"/><rect x="16" y="14" width="1" height="1" fill="#555"/><rect x="16" y="16" width="1" height="1" fill="#555"/><rect x="3" y="9" width="1" height="1" fill="#3a3a3a"/><rect x="4" y="9" width="1" height="1" fill="#3a3a3a"/><rect x="5" y="9" width="1" height="1" fill="#3a3a3a"/><rect x="6" y="9" width="1" height="1" fill="#3a3a3a"/><rect x="7" y="9" width="1" height="1" fill="#3a3a3a"/><rect x="8" y="9" width="1" height="1" fill="#3a3a3a"/><rect x="9" y="9" width="1" height="1" fill="#3a3a3a"/><rect x="10" y="9" width="1" height="1" fill="#3a3a3a"/><rect x="11" y="9" width="1" height="1" fill="#3a3a3a"/><rect x="12" y="9" width="1" height="1" fill="#3a3a3a"/><rect x="13" y="9" width="1" height="1" fill="#3a3a3a"/><rect x="14" y="9" width="1" height="1" fill="#3a3a3a"/><rect x="15" y="9" width="1" height="1" fill="#3a3a3a"/><rect x="16" y="9" width="1" height="1" fill="#3a3a3a"/><rect x="9" y="3" width="1" height="1" fill="#3a3a3a"/><rect x="9" y="4" width="1" height="1" fill="#3a3a3a"/><rect x="9" y="5" width="1" height="1" fill="#3a3a3a"/><rect x="9" y="6" width="1" height="1" fill="#3a3a3a"/><rect x="9" y="7" width="1" height="1" fill="#3a3a3a"/><rect x="9" y="8" width="1" height="1" fill="#3a3a3a"/><rect x="9" y="9" width="1" height="1" fill="#3a3a3a"/><rect x="9" y="10" width="1" height="1" fill="#3a3a3a"/><rect x="9" y="11" width="1" height="1" fill="#3a3a3a"/><rect x="9" y="12" width="1" height="1" fill="#3a3a3a"/><rect x="9" y="13" width="1" height="1" fill="#3a3a3a"/><rect x="9" y="14" width="1" height="1" fill="#3a3a3a"/><rect x="9" y="15" width="1" height="1" fill="#3a3a3a"/><rect x="9" y="16" width="1" height="1" fill="#3a3a3a"/></svg>
<svg class="a" style="left:661px;top:327px;shape-rendering:crispEdges" width="20" height="20" viewBox="0 0 20 20"><rect x="0" y="0" width="20" height="20" fill="#c6c6c6"/><rect x="3" y="3" width="14" height="14" fill="#fff"/><rect x="3" y="3" width="1" height="1" fill="#555"/><rect x="5" y="3" width="1" height="1" fill="#555"/><rect x="7" y="3" width="1" height="1" fill="#555"/><rect x="9" y="3" width="1" height="1" fill="#555"/><rect x="11" y="3" width="1" height="1" fill="#555"/><rect x="13" y="3" width="1" height="1" fill="#555"/><rect x="15" y="3" width="1" height="1" fill="#555"/><rect x="4" y="16" width="1" height="1" fill="#555"/><rect x="6" y="16" width="1" height="1" fill="#555"/><rect x="8" y="16" width="1" height="1" fill="#555"/><rect x="10" y="16" width="1" height="1" fill="#555"/><rect x="12" y="16" width="1" height="1" fill="#555"/><rect x="14" y="16" width="1" height="1" fill="#555"/><rect x="16" y="16" width="1" height="1" fill="#555"/><rect x="3" y="3" width="1" height="1" fill="#555"/><rect x="3" y="5" width="1" height="1" fill="#555"/><rect x="3" y="7" width="1" height="1" fill="#555"/><rect x="3" y="9" width="1" height="1" fill="#555"/><rect x="3" y="11" width="1" height="1" fill="#555"/><rect x="3" y="13" width="1" height="1" fill="#555"/><rect x="3" y="15" width="1" height="1" fill="#555"/><rect x="16" y="4" width="1" height="1" fill="#555"/><rect x="16" y="6" width="1" height="1" fill="#555"/><rect x="16" y="8" width="1" height="1" fill="#555"/><rect x="16" y="10" width="1" height="1" fill="#555"/><rect x="16" y="12" width="1" height="1" fill="#555"/><rect x="16" y="14" width="1" height="1" fill="#555"/><rect x="16" y="16" width="1" height="1" fill="#555"/><rect x="3" y="9" width="1" height="1" fill="#3a3a3a"/><rect x="4" y="9" width="1" height="1" fill="#3a3a3a"/><rect x="5" y="9" width="1" height="1" fill="#3a3a3a"/><rect x="6" y="9" width="1" height="1" fill="#3a3a3a"/><rect x="7" y="9" width="1" height="1" fill="#3a3a3a"/><rect x="8" y="9" width="1" height="1" fill="#3a3a3a"/><rect x="9" y="9" width="1" height="1" fill="#3a3a3a"/><rect x="10" y="9" width="1" height="1" fill="#3a3a3a"/><rect x="11" y="9" width="1" height="1" fill="#3a3a3a"/><rect x="12" y="9" width="1" height="1" fill="#3a3a3a"/><rect x="13" y="9" width="1" height="1" fill="#3a3a3a"/><rect x="14" y="9" width="1" height="1" fill="#3a3a3a"/><rect x="15" y="9" width="1" height="1" fill="#3a3a3a"/><rect x="16" y="9" width="1" height="1" fill="#3a3a3a"/><rect x="9" y="3" width="1" height="1" fill="#555"/><rect x="9" y="5" width="1" height="1" fill="#555"/><rect x="9" y="7" width="1" height="1" fill="#555"/><rect x="9" y="9" width="1" height="1" fill="#555"/><rect x="9" y="11" width="1" height="1" fill="#555"/><rect x="9" y="13" width="1" height="1" fill="#555"/><rect x="9" y="15" width="1" height="1" fill="#555"/></svg>
<svg class="a" style="left:661px;top:351px;shape-rendering:crispEdges" width="20" height="20" viewBox="0 0 20 20"><rect x="0" y="0" width="20" height="20" fill="#c6c6c6"/><rect x="3" y="3" width="14" height="14" fill="#fff"/><rect x="3" y="3" width="1" height="1" fill="#555"/><rect x="5" y="3" width="1" height="1" fill="#555"/><rect x="7" y="3" width="1" height="1" fill="#555"/><rect x="9" y="3" width="1" height="1" fill="#555"/><rect x="11" y="3" width="1" height="1" fill="#555"/><rect x="13" y="3" width="1" height="1" fill="#555"/><rect x="15" y="3" width="1" height="1" fill="#555"/><rect x="4" y="16" width="1" height="1" fill="#555"/><rect x="6" y="16" width="1" height="1" fill="#555"/><rect x="8" y="16" width="1" height="1" fill="#555"/><rect x="10" y="16" width="1" height="1" fill="#555"/><rect x="12" y="16" width="1" height="1" fill="#555"/><rect x="14" y="16" width="1" height="1" fill="#555"/><rect x="16" y="16" width="1" height="1" fill="#555"/><rect x="3" y="3" width="1" height="1" fill="#555"/><rect x="3" y="5" width="1" height="1" fill="#555"/><rect x="3" y="7" width="1" height="1" fill="#555"/><rect x="3" y="9" width="1" height="1" fill="#555"/><rect x="3" y="11" width="1" height="1" fill="#555"/><rect x="3" y="13" width="1" height="1" fill="#555"/><rect x="3" y="15" width="1" height="1" fill="#555"/><rect x="16" y="4" width="1" height="1" fill="#555"/><rect x="16" y="6" width="1" height="1" fill="#555"/><rect x="16" y="8" width="1" height="1" fill="#555"/><rect x="16" y="10" width="1" height="1" fill="#555"/><rect x="16" y="12" width="1" height="1" fill="#555"/><rect x="16" y="14" width="1" height="1" fill="#555"/><rect x="16" y="16" width="1" height="1" fill="#555"/><rect x="3" y="9" width="1" height="1" fill="#555"/><rect x="5" y="9" width="1" height="1" fill="#555"/><rect x="7" y="9" width="1" height="1" fill="#555"/><rect x="9" y="9" width="1" height="1" fill="#555"/><rect x="11" y="9" width="1" height="1" fill="#555"/><rect x="13" y="9" width="1" height="1" fill="#555"/><rect x="15" y="9" width="1" height="1" fill="#555"/><rect x="9" y="3" width="1" height="1" fill="#3a3a3a"/><rect x="9" y="4" width="1" height="1" fill="#3a3a3a"/><rect x="9" y="5" width="1" height="1" fill="#3a3a3a"/><rect x="9" y="6" width="1" height="1" fill="#3a3a3a"/><rect x="9" y="7" width="1" height="1" fill="#3a3a3a"/><rect x="9" y="8" width="1" height="1" fill="#3a3a3a"/><rect x="9" y="9" width="1" height="1" fill="#3a3a3a"/><rect x="9" y="10" width="1" height="1" fill="#3a3a3a"/><rect x="9" y="11" width="1" height="1" fill="#3a3a3a"/><rect x="9" y="12" width="1" height="1" fill="#3a3a3a"/><rect x="9" y="13" width="1" height="1" fill="#3a3a3a"/><rect x="9" y="14" width="1" height="1" fill="#3a3a3a"/><rect x="9" y="15" width="1" height="1" fill="#3a3a3a"/><rect x="9" y="16" width="1" height="1" fill="#3a3a3a"/></svg>
<div class="a" style="left:691px;top:136px;font-size:12px;line-height:14px;color:#505050">下框线(<span style="text-decoration:underline">B</span>)</div>
<div class="a" style="left:691px;top:160px;font-size:12px;line-height:14px;color:#505050">上框线(<span style="text-decoration:underline">P</span>)</div>
<div class="a" style="left:691px;top:184px;font-size:12px;line-height:14px;color:#505050">左框线(<span style="text-decoration:underline">L</span>)</div>
<div class="a" style="left:691px;top:208px;font-size:12px;line-height:14px;color:#505050">右框线(<span style="text-decoration:underline">R</span>)</div>
<div class="a" style="left:691px;top:232px;font-size:12px;line-height:14px;color:#505050">无框线(<span style="text-decoration:underline">N</span>)</div>
<div class="a" style="left:691px;top:257px;font-size:12px;line-height:14px;color:#505050">所有框线(<span style="text-decoration:underline">A</span>)</div>
<div class="a" style="left:691px;top:281px;font-size:12px;line-height:14px;color:#505050">外侧框线(<span style="text-decoration:underline">S</span>)</div>
<div class="a" style="left:691px;top:305px;font-size:12px;line-height:14px;color:#505050">内部框线(<span style="text-decoration:underline">I</span>)</div>
<div class="a" style="left:691px;top:330px;font-size:12px;line-height:14px;color:#505050">内部横框线(<span style="text-decoration:underline">H</span>)</div>
<div class="a" style="left:691px;top:354px;font-size:12px;line-height:14px;color:#505050">内部竖框线(<span style="text-decoration:underline">V</span>)</div>
<div class="a" style="left:658px;top:324px;width:142px;height:1px;background:#e2e2e2"></div>
<svg class="a" style="left:661px;top:375px;" width="20" height="20" viewBox="0 0 20 20"><rect x="3" y="3" width="1" height="1" fill="#555"/><rect x="3" y="5" width="1" height="1" fill="#555"/><rect x="3" y="7" width="1" height="1" fill="#555"/><rect x="3" y="9" width="1" height="1" fill="#555"/><rect x="3" y="11" width="1" height="1" fill="#555"/><rect x="3" y="13" width="1" height="1" fill="#555"/><rect x="3" y="15" width="1" height="1" fill="#555"/><rect x="4" y="16" width="1" height="1" fill="#555"/><rect x="5" y="3" width="1" height="1" fill="#555"/><rect x="6" y="16" width="1" height="1" fill="#555"/><rect x="7" y="3" width="1" height="1" fill="#555"/><rect x="8" y="16" width="1" height="1" fill="#555"/><rect x="9" y="3" width="1" height="1" fill="#555"/><rect x="10" y="16" width="1" height="1" fill="#555"/><rect x="11" y="3" width="1" height="1" fill="#555"/><rect x="12" y="16" width="1" height="1" fill="#555"/><rect x="13" y="3" width="1" height="1" fill="#555"/><rect x="14" y="16" width="1" height="1" fill="#555"/><rect x="15" y="3" width="1" height="1" fill="#555"/><rect x="16" y="4" width="1" height="1" fill="#555"/><rect x="16" y="6" width="1" height="1" fill="#555"/><rect x="16" y="8" width="1" height="1" fill="#555"/><rect x="16" y="10" width="1" height="1" fill="#555"/><rect x="16" y="12" width="1" height="1" fill="#555"/><rect x="16" y="14" width="1" height="1" fill="#555"/><rect x="16" y="16" width="1" height="1" fill="#555"/><path d="M3.5 3.5 L16.5 16.5" stroke="#3a3a3a" stroke-width="1.1"/></svg>
<div class="a" style="left:691px;top:378px;font-size:12px;line-height:14px;color:#505050">斜下框线(<span style="text-decoration:underline">W</span>)</div>
<svg class="a" style="left:661px;top:399px;" width="20" height="20" viewBox="0 0 20 20"><rect x="3" y="3" width="1" height="1" fill="#555"/><rect x="3" y="5" width="1" height="1" fill="#555"/><rect x="3" y="7" width="1" height="1" fill="#555"/><rect x="3" y="9" width="1" height="1" fill="#555"/><rect x="3" y="11" width="1" height="1" fill="#555"/><rect x="3" y="13" width="1" height="1" fill="#555"/><rect x="3" y="15" width="1" height="1" fill="#555"/><rect x="4" y="16" width="1" height="1" fill="#555"/><rect x="5" y="3" width="1" height="1" fill="#555"/><rect x="6" y="16" width="1" height="1" fill="#555"/><rect x="7" y="3" width="1" height="1" fill="#555"/><rect x="8" y="16" width="1" height="1" fill="#555"/><rect x="9" y="3" width="1" height="1" fill="#555"/><rect x="10" y="16" width="1" height="1" fill="#555"/><rect x="11" y="3" width="1" height="1" fill="#555"/><rect x="12" y="16" width="1" height="1" fill="#555"/><rect x="13" y="3" width="1" height="1" fill="#555"/><rect x="14" y="16" width="1" height="1" fill="#555"/><rect x="15" y="3" width="1" height="1" fill="#555"/><rect x="16" y="4" width="1" height="1" fill="#555"/><rect x="16" y="6" width="1" height="1" fill="#555"/><rect x="16" y="8" width="1" height="1" fill="#555"/><rect x="16" y="10" width="1" height="1" fill="#555"/><rect x="16" y="12" width="1" height="1" fill="#555"/><rect x="16" y="14" width="1" height="1" fill="#555"/><rect x="16" y="16" width="1" height="1" fill="#555"/><path d="M3.5 16.5 L16.5 3.5" stroke="#3a3a3a" stroke-width="1.1"/></svg>
<div class="a" style="left:691px;top:402px;font-size:12px;line-height:14px;color:#505050">斜上框线(<span style="text-decoration:underline">U</span>)</div>
<div class="a" style="left:658px;top:421px;width:142px;height:1px;background:#e2e2e2"></div>
<svg class="a" style="left:663px;top:427px;" width="17" height="16" viewBox="0 0 17 16"><text x="0" y="6" font-size="7" font-family="Liberation Sans" fill="#444">A</text><path d="M6 2.5 H15 M6 5 H15" stroke="#999" stroke-width="0.8"/><path d="M0 8 H15" stroke="#4a7bbd" stroke-width="1.6"/><text x="0" y="15" font-size="7" font-family="Liberation Sans" fill="#444">A</text><path d="M6 11.5 H15 M6 14 H15" stroke="#999" stroke-width="0.8"/></svg>
<div class="a" style="left:691px;top:429px;font-size:12px;line-height:14px;color:#505050">横线(<span style="text-decoration:underline">Z</span>)</div>
<div class="a" style="left:690px;top:448px;width:110px;height:1px;background:#e2e2e2"></div>
<svg class="a" style="left:663px;top:453px;" width="17" height="16" viewBox="0 0 17 16"><rect x="1" y="2.5" width="13" height="13" fill="#fff" stroke="#666" stroke-width="1"/><rect x="1" y="2" width="13" height="2.5" fill="#666"/><path d="M1 9 H14 M5.5 4 V15.5 M10 4 V15.5" stroke="#888" stroke-width="0.8"/><path d="M6 11 L13 3.5 L15.5 1.5 L16 2.5 L14.5 4.5 L7.5 12 Z" fill="#4a7bbd"/></svg>
<div class="a" style="left:691px;top:456px;font-size:12px;line-height:14px;color:#505050">绘制表格(<span style="text-decoration:underline">D</span>)</div>
<svg class="a" style="left:663px;top:479px;" width="17" height="15" viewBox="0 0 17 15"><rect x="0.5" y="0.5" width="15" height="13" fill="#fff" stroke="#4a7bbd" stroke-width="1"/><rect x="0.5" y="0.5" width="15" height="2.5" fill="#4a7bbd"/><path d="M0.5 6 H15.5 M0.5 9 H15.5 M0.5 11.5 H15.5 M4 0.5 V13.5 M8 0.5 V13.5 M12 0.5 V13.5" stroke="#4a7bbd" stroke-width="0.9"/></svg>
<div class="a" style="left:691px;top:481px;font-size:12px;line-height:14px;color:#505050">查看网格线(<span style="text-decoration:underline">G</span>)</div>
<svg class="a" style="left:664px;top:504px;" width="13" height="15" viewBox="0 0 13 15"><path d="M1.5 1.5 H8.5 L11.5 4.5 V13.5 H1.5 Z" fill="#fff" stroke="#777" stroke-width="1"/><rect x="3" y="4" width="6" height="8" fill="#f0d9a0"/><path d="M4.5 5 V11 H7.5" stroke="#c9a45a" fill="none" stroke-width="0.8"/></svg>
<div class="a" style="left:691px;top:506px;font-size:12px;line-height:14px;color:#505050">边框和底纹(<span style="text-decoration:underline">O</span>)...</div>
<div class="a" style="left:658px;top:227px;width:143px;height:26px;border:3px solid #e0393f"></div>
<svg class="a" style="left:540px;top:240px;" width="120" height="140" viewBox="0 0 120 140"><path d="M111 5 L107.5 22.5 L102.5 19 L9.3 132 L8.7 131.6 L97 14.5 L93.5 12 Z" fill="#f0393a"/></svg>
</body></html>
